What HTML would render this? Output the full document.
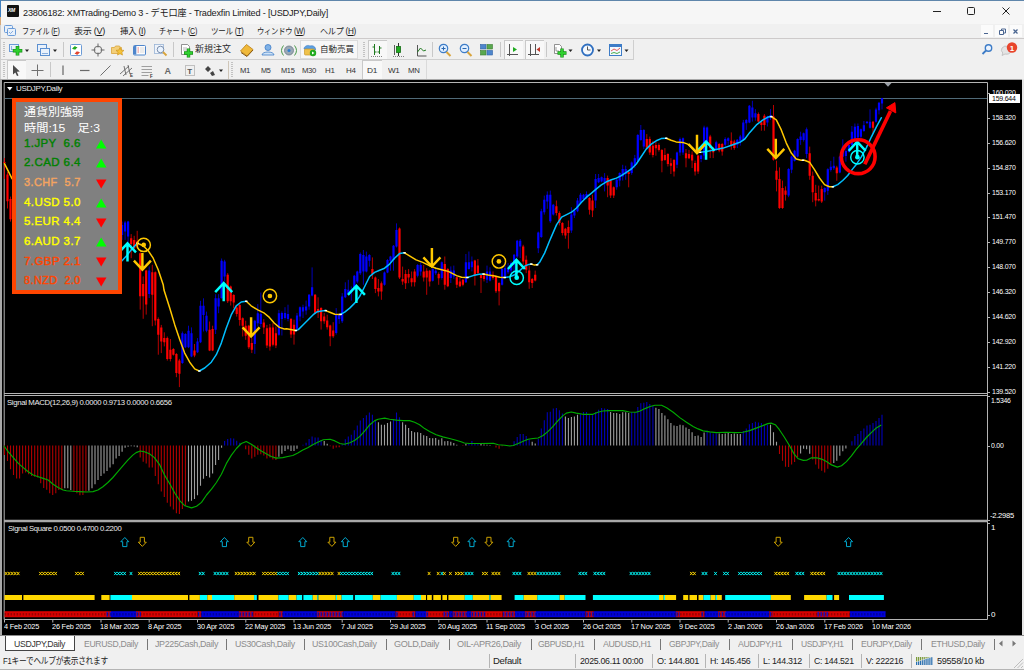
<!DOCTYPE html><html lang="ja"><head><meta charset="utf-8"><title>USDJPY,Daily</title><style>
html,body{margin:0;padding:0;}
body{width:1024px;height:670px;overflow:hidden;background:#f0f0f0;font-family:"Liberation Sans","Noto Sans CJK JP",sans-serif;position:relative;}
.abs{position:absolute;}
.t{position:absolute;white-space:nowrap;line-height:1;}
#titlebar{left:1px;top:1px;width:1023px;height:23px;background:#f6f6f6;}
#menubar{left:1px;top:24px;width:1023px;height:14px;background:#f0f0f0;}
.menu{font-size:8.5px;color:#1a1a1a;top:27px;letter-spacing:-0.3px}
.tf{font-size:7px;color:#333;top:67px;letter-spacing:-0.3px}
.ax{font-size:8px;color:#fff;letter-spacing:-0.25px;left:991px}
.dt{font-size:8px;color:#fff;letter-spacing:-0.2px;top:623px}
.tab{font-size:9px;color:#8c8c8c;top:640px;letter-spacing:-0.35px}
.st{font-size:9px;color:#222;top:657px;letter-spacing:-0.3px}
.sep{position:absolute;width:1px;background:#c8c8c8;}
.row{position:absolute;left:24px;font-weight:normal;font-size:11.8px;letter-spacing:0.42px;white-space:nowrap;line-height:1;-webkit-text-stroke:0.42px currentColor}

.cl{font-size:8px;color:#ececec;letter-spacing:-0.35px}
.xm{font-size:5px;top:570.500px;letter-spacing:0.516px;font-weight:bold;line-height:1}
</style></head><body>
<div class="abs" style="left:0;top:0;width:1024px;height:1px;background:#5f86ab"></div>
<div class="abs" style="left:0;top:0;width:1px;height:670px;background:linear-gradient(#3f7fc0 0 17px,#d6a878 17px 25px,#cfcfcf 25px)"></div>
<div class="abs" id="titlebar"></div>
<div class="abs" id="menubar"></div>
<div class="abs" style="left:7px;top:5px;width:12px;height:12px;background:#111;border-radius:1px"></div>
<div class="t" style="left:8px;top:8px;font-size:5px;font-weight:bold;font-style:italic;color:#fff;letter-spacing:-0.3px">XM</div>
<div class="t" id="title" style="left:23.0px;transform:scaleX(0.9615);transform-origin:0 50%;top:7.500px;font-size:9.500px;color:#1a1a1a;letter-spacing:-0.2px">23806182: XMTrading-Demo 3 - デモ口座 - Tradexfin Limited - [USDJPY,Daily]</div>
<svg class="abs" style="left:920px;top:1px" width="104" height="23" viewBox="0 0 104 23"><g stroke="#222" stroke-width="1" fill="none"><path d="M13 10.5h8"/><rect x="47.5" y="6.5" width="7" height="7" rx="1"/><path d="M82.500 6.500l7 7M89.500 6.500l-7 7"/></g></svg>
<div class="abs" style="left:981.0px;top:25px;width:12.0px;height:12px;background:#fbfbfb"></div>
<div class="abs" style="left:995.0px;top:25px;width:12.5px;height:12px;background:#fbfbfb"></div>
<div class="abs" style="left:1009.5px;top:25px;width:12.5px;height:12px;background:#fbfbfb"></div>
<svg class="abs" style="left:976px;top:25px" width="48" height="13" viewBox="0 0 48 13"><g stroke="#4a6590" stroke-width="1" fill="none"><path d="M8 8.500h4"/><path d="M23.500 5.500h4v4h-4zM25.500 5.500v-1.500h4v4h-1.500"/><path d="M37.500 4.500l4 4M41.500 4.500l-4 4" stroke-width="1.300"/></g></svg>
<svg class="abs" style="left:4px;top:24px" width="13" height="13" viewBox="0 0 13 13"><rect x="0.500" y="1.500" width="8" height="7" rx="1" fill="#e8f0fa" stroke="#6a9bd8"/><rect x="3.500" y="4.500" width="8" height="7" rx="1" fill="#e8f0fa" stroke="#6a9bd8"/><path d="M5 8l1.500 1.500L9 7" stroke="#6a9bd8" fill="none" stroke-width="0.800"/></svg>
<div class="t menu" id="m0" style="left:22.0px;transform:scaleX(0.8362);transform-origin:0 50%;">ファイル (<u>F</u>)</div>
<div class="t menu" id="m1" style="left:74.0px;transform:scaleX(1.0724);transform-origin:0 50%;">表示 (<u>V</u>)</div>
<div class="t menu" id="m2" style="left:119.5px;transform:scaleX(0.9963);transform-origin:0 50%;">挿入 (<u>I</u>)</div>
<div class="t menu" id="m3" style="left:159.0px;transform:scaleX(0.8317);transform-origin:0 50%;">チャート (<u>C</u>)</div>
<div class="t menu" id="m4" style="left:211.0px;transform:scaleX(0.8870);transform-origin:0 50%;">ツール (<u>T</u>)</div>
<div class="t menu" id="m5" style="left:257.0px;transform:scaleX(0.8593);transform-origin:0 50%;">ウィンドウ (<u>W</u>)</div>
<div class="t menu" id="m6" style="left:320.0px;transform:scaleX(0.9580);transform-origin:0 50%;">ヘルプ (<u>H</u>)</div>
<div class="abs" style="left:1px;top:38px;width:1023px;height:1px;background:#cdcaca"></div>
<div class="abs" style="left:1px;top:39px;width:1023px;height:40px;background:#f0f0f0"></div>
<div class="abs" style="left:1px;top:59px;width:633px;height:1px;background:#cfcfcf"></div>
<div class="abs" style="left:633px;top:40px;width:1px;height:20px;background:#cfcfcf"></div>
<div class="abs" style="left:426px;top:60px;width:1px;height:19px;background:#dadada"></div>
<div class="abs" style="left:2.5px;top:42px;width:2px;height:15px;background:repeating-linear-gradient(#c2c2c2 0 1px,#f0f0f0 1px 2px)"></div>
<div class="abs" style="left:363.0px;top:42px;width:2px;height:15px;background:repeating-linear-gradient(#c2c2c2 0 1px,#f0f0f0 1px 2px)"></div>
<div class="abs" style="left:2.5px;top:62px;width:2px;height:15px;background:repeating-linear-gradient(#c2c2c2 0 1px,#f0f0f0 1px 2px)"></div>
<div class="abs" style="left:231.0px;top:62px;width:2px;height:15px;background:repeating-linear-gradient(#c2c2c2 0 1px,#f0f0f0 1px 2px)"></div>
<div class="abs" style="left:228px;top:61px;width:1px;height:18px;background:#cfc6b8"></div>
<div class="sep" style="left:63px;top:42px;height:15px"></div>
<div class="sep" style="left:173px;top:42px;height:15px"></div>
<div class="sep" style="left:432px;top:42px;height:15px"></div>
<div class="sep" style="left:500px;top:42px;height:15px"></div>
<div class="sep" style="left:546px;top:42px;height:15px"></div>
<div class="sep" style="left:50px;top:62px;height:15px"></div>
<div class="abs" style="left:368px;top:40px;width:19px;height:19px;background:#f8f8f8;border-top:1px solid #c9c9c9;border-left:1px solid #c9c9c9;box-sizing:border-box"></div>
<div class="abs" style="left:504px;top:40px;width:19px;height:19px;background:#f8f8f8;border-top:1px solid #c9c9c9;border-left:1px solid #c9c9c9;box-sizing:border-box"></div>
<div class="abs" style="left:525px;top:40px;width:19px;height:19px;background:#f8f8f8;border-top:1px solid #c9c9c9;border-left:1px solid #c9c9c9;box-sizing:border-box"></div>
<div class="abs" style="left:7px;top:60px;width:19px;height:20px;background:#f8f8f8;border-top:1px solid #c9c9c9;border-left:1px solid #c9c9c9;box-sizing:border-box"></div>
<div class="abs" style="left:362px;top:60px;width:20px;height:19px;background:#f8f8f8;border-top:1px solid #c9c9c9;border-left:1px solid #c9c9c9;box-sizing:border-box"></div>
<div class="abs" style="left:300px;top:40px;width:58px;height:19px;border:1px solid #dcdcdc;background:#f7f7f7;box-sizing:border-box"></div>
<svg class="abs" style="left:0;top:39px" width="1024" height="21" viewBox="0 0 1024 21"><rect x="9.500" y="5.500" width="9" height="7" fill="#e9f1fb" stroke="#6b9bd6"/><path d="M11 10.500h6M11.500 7v4" stroke="#6b9bd6" stroke-width="0.700"/><path d="M17.500 7v9.500M12.800 11.700h9.500" stroke="#128a12" stroke-width="3.600"/><path d="M17.500 7.600v8.300M13.400 11.700h8.300" stroke="#2fd02f" stroke-width="2.300"/><path d="M25.0 10.5h4l-2 2.500z" fill="#222"/><rect x="37.500" y="5.500" width="9" height="7" fill="#e9f1fb" stroke="#5b8fd0"/><rect x="40.500" y="9.500" width="9" height="7" fill="#e9f1fb" stroke="#5b8fd0"/><path d="M42 14.500h6" stroke="#5b8fd0" stroke-width="0.700"/><path d="M53.0 10.5h4l-2 2.500z" fill="#222"/><rect x="70.500" y="5.500" width="11" height="11" rx="1" fill="#fff" stroke="#6b9bd6"/><path d="M72 9.500l3-2.500 1 1 1.500 0-2 2.500 -1.500 0z" fill="#1faa1f"/><path d="M80 13.500l-3 2.500-1-1-1.500 0 2-2.500 1.500 0z" fill="#e2452f"/><circle cx="98" cy="11" r="3.800" fill="none" stroke="#6a6a6a" stroke-width="1"/><path d="M98 4.500v4M98 13.500v4M91.500 11h4M100.500 11h4" stroke="#6a6a6a" stroke-width="1"/><path d="M111.500 8.500h3l1-1.500h4l1 1.500h1v6h-10z" fill="#f3cf7a" stroke="#d9a43b" stroke-width="0.800"/><path d="M120 8.500l1.200 2.600 2.800 0.300-2.100 1.900 0.600 2.800-2.500-1.400-2.500 1.400 0.600-2.800-2.100-1.900 2.800-0.300z" fill="#f5c33b" stroke="#c98f1a" stroke-width="0.600"/><rect x="133.500" y="6.500" width="12" height="9.500" rx="1" fill="#fdfdfd" stroke="#4f86cc"/><rect x="134" y="7" width="2.300" height="8.500" fill="#4f86cc"/><path d="M137.500 9h1.500M137.500 11h1.500M137.500 13h1.500" stroke="#d44" stroke-width="0.700"/><path d="M140 9h4.500M140 11h4.500M140 13h4.500" stroke="#c8c8c8" stroke-width="0.600"/><rect x="154.500" y="5.500" width="9" height="9" fill="#eef3fa" stroke="#9ab3d6" stroke-width="0.800"/><circle cx="160.500" cy="10.500" r="3.300" fill="#e9f3ff" stroke="#7b8fae" stroke-width="1"/><path d="M163 13l3.500 3.500" stroke="#d9a43b" stroke-width="1.800"/><path d="M181.500 5.500h6l2 2v8h-8z" fill="#fff" stroke="#777" stroke-width="0.800"/><path d="M183 9h4M183 11h4" stroke="#999" stroke-width="0.700"/><path d="M188.500 9.500v9M184 14h9" stroke="#128a12" stroke-width="3.400"/><path d="M188.500 10.100v7.800M184.600 14h7.800" stroke="#2fd02f" stroke-width="2.100"/><path d="M240.500 12l6-6.500 6.500 5-6 6.500z" fill="#f0b93a" stroke="#b97d14" stroke-width="0.800"/><path d="M241 13.500l6 4 6-6.500" fill="none" stroke="#8a5a0c" stroke-width="1"/><circle cx="268" cy="8.500" r="3" fill="#7fb1e6" stroke="#3d7cc7" stroke-width="0.800"/><path d="M262 16c0-4 12-4 12 0z" fill="#cfe3f7" stroke="#3d7cc7" stroke-width="0.800"/><circle cx="289" cy="11.500" r="4.500" fill="#9aa8b5" stroke="#6e7c8a" stroke-width="0.800"/><path d="M283.500 6.500a8 8 0 0 0 0 10M294.500 6.500a8 8 0 0 1 0 10" fill="none" stroke="#4a9a4a" stroke-width="1"/><circle cx="289" cy="11.500" r="1.500" fill="#2e7fd1"/><path d="M304 10c0-3 4-4.500 6-3 3-1 6 1 5.500 4z" fill="#5da0e0" stroke="#3d7cc7" stroke-width="0.600"/><rect x="304.500" y="10" width="10" height="6" rx="1" fill="#f0c14a" stroke="#c9962a" stroke-width="0.700"/><circle cx="313" cy="14" r="3.200" fill="#1faa1f"/><path d="M312 12.500l2.500 1.500-2.500 1.500z" fill="#fff"/><path d="M374.500 5v11M372.500 8h2M374.500 13h2M379.500 7v8M377.500 13h2M379.500 9h2" stroke="#1f7a1f" stroke-width="1" fill="none"/><path d="M371 17.500h11" stroke="#666" stroke-width="0.800" stroke-dasharray="1 1"/><path d="M398.500 4v13" stroke="#333" stroke-width="1"/><rect x="396.500" y="7.500" width="4" height="6" fill="#1faa1f" stroke="#156d15" stroke-width="0.800"/><path d="M394.500 6v10" stroke="#333" stroke-width="0.800"/><path d="M393 17.500h11" stroke="#666" stroke-width="0.800" stroke-dasharray="1 1"/><path d="M417.500 6v11h9" stroke="#555" stroke-width="1" fill="none"/><path d="M417.500 13l3-4 3 3 2.500-1" stroke="#1f7a1f" stroke-width="1" fill="none"/><circle cx="443.500" cy="9.500" r="4.200" fill="#dfeeff" stroke="#3d7cc7" stroke-width="1.200"/><path d="M441.500 9.500h4M443.500 7.500v4" stroke="#2b68b0" stroke-width="1"/><path d="M446.500 13l4 4" stroke="#d9a43b" stroke-width="2"/><circle cx="464.500" cy="9.500" r="4.200" fill="#dfeeff" stroke="#3d7cc7" stroke-width="1.200"/><path d="M462.500 9.500h4" stroke="#2b68b0" stroke-width="1"/><path d="M467.500 13l4 4" stroke="#d9a43b" stroke-width="2"/><rect x="480.500" y="5.500" width="5.500" height="4.500" fill="#4f86cc" stroke="#2f62a6" stroke-width="0.600"/><rect x="487" y="5.500" width="5.500" height="4.500" fill="#5aa84e" stroke="#3b7d32" stroke-width="0.600"/><rect x="480.500" y="11.500" width="5.500" height="4.500" fill="#5aa84e" stroke="#3b7d32" stroke-width="0.600"/><rect x="487" y="11.500" width="5.500" height="4.500" fill="#4f86cc" stroke="#2f62a6" stroke-width="0.600"/><path d="M509.500 5v12M507 15.500h11" stroke="#555" stroke-width="1" fill="none"/><path d="M513 8l4 2.500-4 2.500z" fill="#1faa1f"/><path d="M530.500 5v12M528 15.500h11M535.500 5v10" stroke="#555" stroke-width="1" fill="none"/><path d="M540 8l-3.500 2.500 3.500 2.500z" fill="#c0392b"/><path d="M554.500 5.500h5l2 2v7h-7z" fill="#fff" stroke="#777" stroke-width="0.800"/><path d="M556 8v4h3" stroke="#777" stroke-width="0.700" fill="none"/><path d="M562 9.500v9M557.500 14h9" stroke="#128a12" stroke-width="3.400"/><path d="M562 10.100v7.800M558.100 14h7.800" stroke="#2fd02f" stroke-width="2.100"/><path d="M568.5 10.5h4l-2 2.500z" fill="#222"/><circle cx="587.500" cy="11" r="5.500" fill="#f4f8fd" stroke="#2f6fc0" stroke-width="1.800"/><path d="M587.500 7.500v3.500h3" stroke="#444" stroke-width="0.900" fill="none"/><path d="M597.0 10.5h4l-2 2.500z" fill="#222"/><rect x="609.500" y="5.500" width="12" height="11" fill="#f4f8fd" stroke="#3d7cc7" stroke-width="1"/><rect x="610" y="6" width="11" height="2" fill="#3d7cc7"/><path d="M611 12l3-2 3 1.500 3-2.500" stroke="#d33" stroke-width="0.800" fill="none"/><path d="M611 14.500l3-1 3 1 3-1.500" stroke="#1f9a1f" stroke-width="0.800" fill="none"/><path d="M624.5 10.5h4l-2 2.500z" fill="#222"/><circle cx="988.500" cy="9" r="3.200" fill="#eaf3ff" stroke="#3d7cc7" stroke-width="1.400"/><path d="M986 11.500l-3.500 3.500" stroke="#3d7cc7" stroke-width="1.800"/><path d="M1002 9a5 4 0 1 1 3 6l-3 1.500 0.800-2.500a4 4 0 0 1-0.800-5z" fill="#e4e4e4" stroke="#b5b5b5" stroke-width="0.700"/><circle cx="1012" cy="8.500" r="5.200" fill="#e8452c"/><text x="1012" y="11.500" font-size="8" font-weight="bold" fill="#fff" text-anchor="middle" font-family="Liberation Sans,sans-serif">1</text></svg>
<div class="t" id="neworder" style="left:195.0px;transform:scaleX(1.0226);transform-origin:0 50%;top:45.200px;font-size:8.800px;color:#2a2a2a;letter-spacing:0px">新規注文</div>
<div class="t" id="autotr" style="left:320.0px;transform:scaleX(0.9995);transform-origin:0 50%;top:45.200px;font-size:8.500px;color:#2a2a2a;letter-spacing:0px">自動売買</div>
<svg class="abs" style="left:0;top:60px" width="440" height="20" viewBox="0 0 440 20"><path d="M13 5v9.500l2.300-2 1.700 3.600 1.500-0.700-1.700-3.600 3-0.200z" fill="#4a4a4a"/><path d="M37.500 4.500v11.500M31.500 10.500h12" stroke="#707070" stroke-width="1"/><path d="M63 5.500v9.500" stroke="#7a7a7a" stroke-width="1.400"/><path d="M80 10.500h9.500" stroke="#6a6a6a" stroke-width="1.200"/><path d="M100.500 15.500l10-10" stroke="#707070" stroke-width="1"/><path d="M120 14l9-8M123 16l9-8M124 6l2 9M128 5l2 9" stroke="#555" stroke-width="0.800" fill="none"/><text x="130" y="17" font-size="4.500" font-weight="bold" fill="#333" font-family="Liberation Sans,sans-serif">E</text><path d="M141.500 6.500h10.500M141.500 9.500h10.500M141.500 12.500h10.500M141.500 15.500h7" stroke="#8a8a8a" stroke-width="0.800"/><text x="150" y="18" font-size="4.500" font-weight="bold" fill="#333" font-family="Liberation Sans,sans-serif">F</text><text x="164.500" y="14" font-size="9" font-weight="bold" fill="#666" font-family="Liberation Sans,sans-serif">A</text><rect x="185.500" y="5.500" width="9" height="10" fill="none" stroke="#777" stroke-width="0.800" stroke-dasharray="1 1"/><text x="187.200" y="13.500" font-size="8" font-weight="bold" fill="#555" font-family="Liberation Sans,sans-serif">T</text><path d="M205 9l3-3 3 3-3 3zM210 13l3-2 2 4-3 1z" fill="#444"/><path d="M219 9.500h4l-2 2.500z" fill="#222"/></svg>
<div class="t tf" id="tf0" style="left:240.0px;transform:scaleX(1.0959);transform-origin:0 50%;">M1</div>
<div class="t tf" id="tf1" style="left:261.0px;transform:scaleX(1.0411);transform-origin:0 50%;">M5</div>
<div class="t tf" id="tf2" style="left:280.5px;transform:scaleX(1.0614);transform-origin:0 50%;">M15</div>
<div class="t tf" id="tf3" style="left:301.5px;transform:scaleX(1.1007);transform-origin:0 50%;">M30</div>
<div class="t tf" id="tf4" style="left:325.0px;transform:scaleX(1.1364);transform-origin:0 50%;">H1</div>
<div class="t tf" id="tf5" style="left:345.5px;transform:scaleX(1.1364);transform-origin:0 50%;">H4</div>
<div class="t tf" id="tf6" style="left:367.0px;transform:scaleX(1.1963);transform-origin:0 50%;">D1</div>
<div class="t tf" id="tf7" style="left:388.0px;transform:scaleX(1.1609);transform-origin:0 50%;">W1</div>
<div class="t tf" id="tf8" style="left:408.0px;transform:scaleX(1.1168);transform-origin:0 50%;">MN</div>
<div class="abs" style="left:0;top:79px;width:1024px;height:557px;background:#a9a9a9"></div>
<div class="abs" style="left:2px;top:80px;width:1020px;height:555px;background:#000"></div>
<div class="abs" style="left:1022px;top:79px;width:2px;height:557px;background:#e6e6e6"></div>
<svg class="abs" style="left:0;top:0" width="1024" height="670" viewBox="0 0 1024 670"><path d="M4.200 619.500V82.500H987.500V619.500H4.200" fill="none" stroke="#b4b4b4" stroke-width="1"/><path d="M4 393.500H988M4 395.500H988" stroke="#b4b4b4" stroke-width="1"/><path d="M4 521H988" stroke="#a8a8a8" stroke-width="2.400"/><path d="M5 98.500H987" stroke="#506a78" stroke-width="1"/><path d="M884.500 83h7l-3.500 3.800z" fill="#9aa0a8"/><path d="M988 93.5h2" stroke="#b4b4b4" stroke-width="1"/><path d="M988 118.5h2" stroke="#b4b4b4" stroke-width="1"/><path d="M988 143.5h2" stroke="#b4b4b4" stroke-width="1"/><path d="M988 168.5h2" stroke="#b4b4b4" stroke-width="1"/><path d="M988 193.5h2" stroke="#b4b4b4" stroke-width="1"/><path d="M988 217.5h2" stroke="#b4b4b4" stroke-width="1"/><path d="M988 242.5h2" stroke="#b4b4b4" stroke-width="1"/><path d="M988 267.5h2" stroke="#b4b4b4" stroke-width="1"/><path d="M988 292.5h2" stroke="#b4b4b4" stroke-width="1"/><path d="M988 317.5h2" stroke="#b4b4b4" stroke-width="1"/><path d="M988 342.5h2" stroke="#b4b4b4" stroke-width="1"/><path d="M988 367.5h2" stroke="#b4b4b4" stroke-width="1"/><path d="M988 392.5h2" stroke="#b4b4b4" stroke-width="1"/><path d="M988 396.5h2" stroke="#b4b4b4" stroke-width="1"/><path d="M988 446.5h2" stroke="#b4b4b4" stroke-width="1"/><path d="M988 520.5h2" stroke="#b4b4b4" stroke-width="1"/><path d="M988 523.5h2" stroke="#b4b4b4" stroke-width="1"/><path d="M988 615.5h2" stroke="#b4b4b4" stroke-width="1"/><path d="M4.5 620v2.500" stroke="#b4b4b4" stroke-width="1"/><path d="M52.8 620v2.500" stroke="#b4b4b4" stroke-width="1"/><path d="M101.0 620v2.500" stroke="#b4b4b4" stroke-width="1"/><path d="M149.2 620v2.500" stroke="#b4b4b4" stroke-width="1"/><path d="M197.5 620v2.500" stroke="#b4b4b4" stroke-width="1"/><path d="M245.8 620v2.500" stroke="#b4b4b4" stroke-width="1"/><path d="M294.0 620v2.500" stroke="#b4b4b4" stroke-width="1"/><path d="M342.2 620v2.500" stroke="#b4b4b4" stroke-width="1"/><path d="M390.5 620v2.500" stroke="#b4b4b4" stroke-width="1"/><path d="M438.8 620v2.500" stroke="#b4b4b4" stroke-width="1"/><path d="M487.0 620v2.500" stroke="#b4b4b4" stroke-width="1"/><path d="M535.2 620v2.500" stroke="#b4b4b4" stroke-width="1"/><path d="M583.5 620v2.500" stroke="#b4b4b4" stroke-width="1"/><path d="M631.8 620v2.500" stroke="#b4b4b4" stroke-width="1"/><path d="M680.0 620v2.500" stroke="#b4b4b4" stroke-width="1"/><path d="M728.2 620v2.500" stroke="#b4b4b4" stroke-width="1"/><path d="M776.5 620v2.500" stroke="#b4b4b4" stroke-width="1"/><path d="M824.8 620v2.500" stroke="#b4b4b4" stroke-width="1"/><path d="M873.0 620v2.500" stroke="#b4b4b4" stroke-width="1"/><path d="M122.1 221.6V239.9M125.1 220.8V239.9M128.1 220.8V242.4M149.2 266.5V298.0M221.6 258.5V298.8M224.6 259.8V281.4M182.4 331.5V363.9M185.4 333.2V348.1M188.5 325.7V348.1M191.5 327.4V357.2M197.5 338.1V353.1M200.5 300.8V343.1M203.5 298.3V331.5M206.5 311.6V332.3M215.6 294.2V334.0M218.6 294.2V313.2M254.8 319.9V353.9M257.8 304.1V326.5M260.8 292.5V327.4M278.9 309.9V335.7M281.9 311.4V335.5M285.0 307.2V319.7M288.0 304.7V321.3M297.0 313.0V329.6M300.0 306.4V321.3M303.0 304.7V318.0M306.1 300.6V314.7M309.1 294.0V309.7M312.1 267.4V296.4M336.2 308.1V334.6M339.2 313.0V323.8M342.2 293.1V323.0M345.3 282.3V298.1M348.3 279.8V294.8M351.3 286.5V300.6M354.3 274.9V290.6M357.3 270.7V283.2M360.3 252.5V274.9M363.4 250.0V284.8M366.4 251.6V272.4M369.4 254.1V266.6M384.5 271.5V285.7M387.5 259.1V273.2M390.5 255.8V270.7M393.5 245.0V270.7M396.5 223.4V247.5M417.6 264.1V277.4M420.7 262.4V275.7M432.7 268.2V281.5M435.7 267.4V274.9M441.8 261.4V279.7M450.8 266.4V283.0M453.8 265.6V278.9M465.9 254.0V283.0M468.9 251.5V269.7M471.9 256.5V271.4M487.0 265.6V283.0M490.0 267.3V281.4M502.1 268.1V285.5M505.1 262.3V278.0M508.1 263.1V273.9M511.1 261.4V274.7M514.1 254.0V273.1M517.2 239.9V258.1M520.2 239.0V258.1M538.3 231.6V253.1M541.3 208.8V237.9M544.3 195.6V214.6M547.3 191.4V208.8M550.3 190.6V222.9M553.3 203.9V215.5M571.4 207.2V232.9M574.4 209.7V218.0M577.5 198.0V212.2M580.5 193.1V203.9M583.5 193.9V199.7M586.5 191.4V198.9M595.6 174.0V208.0M598.6 174.0V183.1M601.6 176.5V182.3M604.6 173.1V191.4M616.7 179.0V189.7M619.7 172.3V186.4M622.7 164.8V180.6M625.7 165.7V179.8M631.7 161.5V174.8M634.8 154.9V168.2M637.8 134.1V161.5M640.8 125.0V140.8M643.8 129.2V149.1M677.0 151.6V168.2M680.0 137.5V155.7M683.0 137.5V154.9M701.1 154.8V162.2M704.1 125.7V159.7M707.1 126.5V144.8M716.2 140.7V150.6M725.2 137.3V146.5M728.2 137.3V144.8M737.3 139.0V148.1M740.3 134.8V145.6M743.3 119.9V140.7M746.3 119.1V129.9M749.4 105.0V123.2M752.4 100.8V121.6M755.4 109.1V120.7M767.4 115.8V126.5M770.5 109.1V119.9M788.6 168.2V197.2M791.6 155.7V173.2M794.6 149.9V161.5M797.6 138.3V157.4M800.6 131.7V144.9M803.6 132.5V141.6M806.6 127.5V158.2M824.7 187.3V200.6M827.8 168.3V194.9M830.8 160.9V171.6M833.8 156.7V170.0M839.8 155.9V173.3M842.8 139.3V157.5M845.9 145.1V161.7M848.9 144.3V152.6M851.9 126.0V145.9M854.9 123.5V139.3M857.9 123.5V141.8M860.9 128.5V138.4M863.9 121.0V131.8M867.0 121.0V123.5M870.0 109.4V128.5M876.0 107.7V122.7M879.0 101.9V114.4M882.0 97.8V109.4" stroke="#0000ff" stroke-width="1" opacity="0.720"/><path d="M4.5 158.0V179.0M7.5 172.0V208.5M10.5 196.6V221.6M131.2 234.1V258.2M134.2 235.8V251.5M137.2 230.8V248.2M140.2 252.4V309.6M143.2 276.4V318.8M146.2 269.8V314.6M152.3 264.8V326.2M155.3 271.4V325.4M227.7 273.1V303.0M230.7 285.6V305.5M158.3 317.4V354.7M161.3 324.9V353.1M164.3 332.3V346.4M167.3 336.5V360.6M170.4 339.0V361.4M173.4 348.1V355.6M176.4 353.1V377.2M179.4 358.9V387.1M194.5 344.0V357.2M209.6 321.5V351.1M212.6 325.7V351.1M233.7 294.2V308.3M236.7 305.8V316.6M239.7 304.1V325.7M242.7 317.4V336.5M245.7 320.7V339.8M248.8 324.9V348.9M251.8 338.1V353.1M263.8 319.1V334.0M266.9 324.9V348.1M269.9 324.0V350.6M272.9 323.2V346.4M275.9 326.5V348.1M291.0 318.0V337.9M294.0 319.7V344.6M315.1 294.0V313.9M318.1 297.3V318.0M321.1 307.2V329.6M324.2 313.0V323.8M327.2 314.7V329.6M330.2 324.7V346.2M333.2 322.2V337.9M372.4 257.4V279.0M375.4 276.5V293.1M378.4 279.0V296.4M381.4 281.5V299.8M399.5 227.5V279.0M402.6 266.6V284.8M405.6 269.9V289.0M408.6 269.1V283.2M411.6 271.5V286.5M414.6 269.1V286.5M423.7 264.9V281.5M426.7 268.2V294.8M429.7 269.9V286.5M438.7 272.4V284.8M444.8 256.5V289.7M447.8 268.1V287.2M456.8 276.4V288.0M459.9 278.0V287.2M462.9 278.9V286.3M474.9 259.8V285.5M477.9 259.0V273.9M481.0 273.9V293.0M484.0 274.7V281.4M493.0 271.4V279.7M496.0 275.6V293.0M499.1 282.2V305.4M523.2 244.8V264.8M526.2 255.6V273.1M529.2 265.6V288.8M532.2 278.0V288.0M535.2 270.6V281.4M556.4 200.5V215.5M559.4 211.3V225.4M562.4 222.1V235.4M565.4 227.9V238.7M568.4 220.5V248.7M589.5 197.2V214.6M592.5 194.7V217.1M607.6 175.6V197.2M610.6 179.8V198.0M613.7 186.4V198.0M628.7 171.5V187.3M646.8 134.1V148.2M649.8 136.6V154.9M652.9 140.8V157.4M655.9 141.6V155.7M658.9 143.3V151.6M661.9 149.1V172.3M664.9 148.2V160.7M667.9 153.2V166.5M670.9 158.2V174.0M674.0 159.0V176.5M686.0 149.1V167.3M689.0 149.9V159.0M692.1 151.4V168.0M695.1 160.6V175.5M698.1 154.8V173.9M710.2 134.8V158.1M713.2 147.3V158.1M719.2 143.1V152.3M722.2 143.1V155.6M731.3 132.4V149.8M734.3 139.8V149.8M758.4 112.4V122.4M761.4 121.6V130.7M764.4 114.1V130.7M773.5 105.0V160.6M776.5 160.7V191.4M779.5 167.4V208.9M782.5 180.6V208.9M785.5 186.4V200.6M809.7 146.6V179.8M812.7 171.5V202.2M815.7 184.8V206.4M818.7 185.6V201.4M821.7 185.6V203.0M836.8 165.8V180.8M873.0 121.0V133.5" stroke="#ff0000" stroke-width="1" opacity="0.720"/><path d="M122.1 225.0V234.9M125.1 222.5V231.6M128.1 221.6V236.6M149.2 270.6V293.9M221.6 260.7V298.0M224.6 261.5V276.4M182.4 333.2V363.0M185.4 334.0V347.3M188.5 330.7V347.3M191.5 333.2V356.4M197.5 341.5V352.3M200.5 305.8V342.3M203.5 305.8V314.9M206.5 315.7V330.7M215.6 298.3V329.8M218.6 298.3V306.6M254.8 320.7V344.0M257.8 313.2V323.2M260.8 314.1V324.0M278.9 313.2V334.8M281.9 313.0V318.9M285.0 313.0V318.0M288.0 313.9V318.9M297.0 315.5V328.8M300.0 307.2V316.4M303.0 307.2V311.4M306.1 306.4V310.6M309.1 294.8V306.4M312.1 287.3V295.6M336.2 313.9V333.0M339.2 313.9V318.9M342.2 296.4V321.3M345.3 289.0V297.3M348.3 289.8V293.1M351.3 289.8V292.3M354.3 275.7V289.8M357.3 271.5V281.5M360.3 254.1V273.2M363.4 254.9V271.5M366.4 256.6V271.5M369.4 254.9V260.8M384.5 272.4V284.8M387.5 259.9V272.4M390.5 256.6V260.8M393.5 245.8V259.9M396.5 230.0V246.6M417.6 264.9V275.7M420.7 264.9V271.5M432.7 269.1V280.7M435.7 270.7V273.2M441.8 262.3V278.0M450.8 270.6V278.0M453.8 270.6V276.4M465.9 262.3V282.2M468.9 262.3V268.9M471.9 261.4V267.3M487.0 271.4V279.7M490.0 271.4V280.5M502.1 268.9V284.7M505.1 268.1V276.4M508.1 268.9V272.2M511.1 263.1V270.6M514.1 254.8V264.8M517.2 240.7V256.5M520.2 240.7V246.5M538.3 232.4V248.2M541.3 211.3V237.1M544.3 199.7V212.2M547.3 194.7V201.4M550.3 194.7V221.3M553.3 204.7V214.6M571.4 214.6V230.4M574.4 210.5V215.5M577.5 200.5V211.3M580.5 194.7V203.0M583.5 194.7V198.9M586.5 193.9V198.0M595.6 179.0V200.5M598.6 178.1V182.3M601.6 177.3V181.4M604.6 178.1V182.3M616.7 179.8V187.3M619.7 173.1V180.6M622.7 169.0V176.5M625.7 169.0V174.0M631.7 162.4V173.1M634.8 158.2V165.7M637.8 135.0V160.7M640.8 130.0V139.9M643.8 130.0V146.6M677.0 152.4V164.8M680.0 139.1V152.4M683.0 138.3V152.4M701.1 155.6V158.9M704.1 127.4V155.6M707.1 127.4V141.5M716.2 142.3V149.8M725.2 139.0V144.8M728.2 138.2V140.7M737.3 139.8V144.8M740.3 136.5V140.7M743.3 122.4V139.8M746.3 119.9V123.2M749.4 105.8V122.4M752.4 107.5V117.4M755.4 113.3V117.4M767.4 116.6V122.4M770.5 114.9V118.2M788.6 169.0V195.6M791.6 156.6V169.8M794.6 150.8V160.7M797.6 139.1V156.6M800.6 136.6V140.0M803.6 133.3V140.0M806.6 129.2V154.1M824.7 188.1V192.3M827.8 169.2V190.7M830.8 166.7V170.0M833.8 165.8V168.3M839.8 156.7V172.5M842.8 146.7V156.7M845.9 150.9V155.9M848.9 145.1V151.7M851.9 131.8V145.1M854.9 126.8V138.4M857.9 126.0V137.6M860.9 129.3V136.8M863.9 125.2V131.0M867.0 121.8V123.2M870.0 121.8V127.7M876.0 109.4V121.8M879.0 102.8V110.2M882.0 98.3V103.6" stroke="#0000ff" stroke-width="2.200"/><path d="M4.5 162.0V163.0M7.5 174.5V201.3M10.5 199.0V219.3M131.2 238.2V244.1M134.2 239.9V248.2M137.2 241.6V246.5M140.2 253.2V296.3M143.2 283.9V296.3M146.2 270.6V304.6M152.3 272.3V294.7M155.3 272.3V320.4M227.7 274.8V301.3M230.7 286.4V301.3M158.3 319.1V334.8M161.3 327.4V341.5M164.3 338.1V342.3M167.3 338.1V358.9M170.4 349.8V358.9M173.4 348.9V354.7M176.4 353.9V373.0M179.4 360.6V373.8M194.5 350.6V355.6M209.6 329.8V350.6M212.6 329.0V350.6M233.7 295.0V302.5M236.7 307.4V314.1M239.7 304.9V319.9M242.7 318.2V325.7M245.7 325.7V335.7M248.8 325.7V347.3M251.8 343.1V349.8M263.8 322.4V327.4M266.9 328.2V345.6M269.9 327.4V346.4M272.9 327.4V344.8M275.9 333.2V345.6M291.0 318.9V334.6M294.0 324.7V334.6M315.1 294.8V313.0M318.1 308.9V312.2M321.1 308.1V321.3M324.2 316.4V321.3M327.2 320.5V327.2M330.2 325.5V336.3M333.2 330.5V336.3M372.4 269.1V274.0M375.4 277.4V289.0M378.4 288.1V291.5M381.4 283.2V291.5M399.5 228.4V277.4M402.6 279.0V281.5M405.6 274.0V283.2M408.6 274.0V277.4M411.6 278.2V282.3M414.6 271.5V282.3M423.7 271.5V277.4M426.7 270.7V277.4M429.7 270.7V281.5M438.7 274.0V278.2M444.8 263.9V284.7M447.8 268.9V286.3M456.8 277.2V284.7M459.9 281.4V286.3M462.9 279.7V284.7M474.9 260.6V274.7M477.9 265.6V273.1M481.0 274.7V278.0M484.0 275.6V278.9M493.0 274.7V278.0M496.0 276.4V291.3M499.1 283.0V291.3M523.2 246.5V261.4M526.2 259.8V269.7M529.2 270.6V282.2M532.2 278.9V283.0M535.2 274.7V280.5M556.4 206.3V213.0M559.4 213.0V222.9M562.4 222.9V232.9M565.4 228.8V235.4M568.4 227.1V232.9M589.5 198.0V209.7M592.5 200.5V210.5M607.6 178.1V185.6M610.6 180.6V195.6M613.7 187.3V195.6M628.7 172.3V174.0M646.8 139.1V147.4M649.8 139.1V152.4M652.9 145.8V154.9M655.9 144.9V148.2M658.9 144.9V149.9M661.9 149.9V160.7M664.9 154.9V159.9M667.9 154.1V164.0M670.9 163.2V165.7M674.0 159.9V171.5M686.0 153.2V158.2M689.0 154.1V158.2M692.1 154.8V160.6M695.1 163.1V171.4M698.1 155.6V171.4M710.2 136.5V148.1M713.2 148.1V152.3M719.2 144.0V150.6M722.2 144.0V151.4M731.3 140.7V145.6M734.3 141.5V148.1M758.4 114.1V121.6M761.4 122.4V124.9M764.4 115.8V124.9M773.5 116.6V159.7M776.5 170.7V179.8M779.5 179.0V208.0M782.5 188.1V208.0M785.5 190.6V194.7M809.7 153.2V175.7M812.7 175.7V192.3M815.7 193.1V200.6M818.7 198.9V200.6M821.7 188.9V201.4M836.8 167.5V173.3M873.0 121.8V127.7" stroke="#ff0000" stroke-width="2.200"/><path d="M4.5 163.7 L12.0 178.7" fill="none" stroke="#ffc800" stroke-width="1.500" stroke-linejoin="round" stroke-linecap="round"/><path d="M122.0 260.7 L126.6 255.7 L132.5 248.2 L137.4 243.2" fill="none" stroke="#00bfff" stroke-width="1.500" stroke-linejoin="round" stroke-linecap="round"/><path d="M137.4 243.2 L143.2 245.7 L148.2 250.7 L153.2 258.2 L158.2 269.8 L163.2 284.7 L164.0 290.0 L169.8 308.3 L174.8 324.9 L179.8 339.8 L184.7 353.1 L189.7 362.2 L194.7 368.9 L199.3 371.0" fill="none" stroke="#ffc800" stroke-width="1.500" stroke-linejoin="round" stroke-linecap="round"/><path d="M199.3 371.0 L204.7 368.0 L211.3 362.2 L216.3 354.7 L221.3 343.1 L226.2 328.2 L231.2 314.9 L236.2 305.8 L241.2 302.0 L246.2 301.3" fill="none" stroke="#00bfff" stroke-width="1.500" stroke-linejoin="round" stroke-linecap="round"/><path d="M246.2 301.3 L251.1 305.8 L257.8 309.9 L264.4 313.2 L269.4 317.4 L274.4 323.2 L279.4 327.4 L284.3 329.0 L286.6 328.8 L295.8 330.5" fill="none" stroke="#ffc800" stroke-width="1.500" stroke-linejoin="round" stroke-linecap="round"/><path d="M295.8 330.5 L298.3 329.6 L303.2 324.7 L308.2 319.7 L313.2 314.7 L317.4 311.7 L321.5 310.9 L325.7 310.6" fill="none" stroke="#00bfff" stroke-width="1.500" stroke-linejoin="round" stroke-linecap="round"/><path d="M325.7 310.6 L329.8 312.2 L334.8 314.2 L340.6 314.4" fill="none" stroke="#ffc800" stroke-width="1.500" stroke-linejoin="round" stroke-linecap="round"/><path d="M340.6 314.4 L344.7 312.2 L349.7 308.1 L354.7 303.1 L359.7 296.4 L364.7 286.5 L369.6 276.5 L374.6 272.4 L379.6 270.2 L384.6 268.2 L389.6 264.1 L394.5 258.3 L399.5 253.6 L404.5 252.8" fill="none" stroke="#00bfff" stroke-width="1.500" stroke-linejoin="round" stroke-linecap="round"/><path d="M404.5 252.8 L409.5 255.8 L416.1 259.9 L422.8 262.4 L429.4 265.7 L436.0 268.2 L442.7 269.9 L448.3 271.4 L456.6 275.6 L461.6 277.2 L467.4 277.5" fill="none" stroke="#ffc800" stroke-width="1.500" stroke-linejoin="round" stroke-linecap="round"/><path d="M467.4 277.5 L473.2 275.6 L479.0 274.2 L483.5 274.1" fill="none" stroke="#00bfff" stroke-width="1.500" stroke-linejoin="round" stroke-linecap="round"/><path d="M483.5 274.1 L488.1 275.1 L494.8 276.0 L499.8 277.2 L504.7 277.5" fill="none" stroke="#ffc800" stroke-width="1.500" stroke-linejoin="round" stroke-linecap="round"/><path d="M504.7 277.5 L509.7 276.7 L514.7 274.7 L519.7 270.6 L524.7 266.1 L528.8 264.4 L531.3 264.1" fill="none" stroke="#00bfff" stroke-width="1.500" stroke-linejoin="round" stroke-linecap="round"/><path d="M531.3 264.1 L534.6 265.1 L537.1 264.8" fill="none" stroke="#ffc800" stroke-width="1.500" stroke-linejoin="round" stroke-linecap="round"/><path d="M537.1 264.8 L539.6 262.3 L544.6 253.1 L549.6 240.7 L551.6 236.1 L556.6 224.6 L561.6 217.1 L566.6 214.6 L571.5 212.2 L576.5 208.0 L581.5 202.2 L586.5 197.2 L591.5 193.1 L596.4 188.9 L601.4 184.8 L606.4 181.8 L611.4 179.8 L616.4 178.1 L621.3 175.6 L626.3 172.3 L631.3 169.0 L636.3 164.0 L641.3 156.5 L646.2 149.1 L651.2 144.1 L656.2 140.8 L661.2 138.6 L666.2 138.3" fill="none" stroke="#00bfff" stroke-width="1.500" stroke-linejoin="round" stroke-linecap="round"/><path d="M666.2 138.3 L671.1 140.3 L676.1 141.9 L682.8 142.4 L687.7 144.1 L692.7 148.2 L696.9 152.4 L700.0 152.3" fill="none" stroke="#ffc800" stroke-width="1.500" stroke-linejoin="round" stroke-linecap="round"/><path d="M700.0 152.3 L706.6 151.4 L714.9 149.8 L723.2 148.1 L731.5 145.3 L739.8 142.3 L744.8 139.0 L749.8 132.4 L756.4 124.9 L763.0 119.9 L768.0 117.1 L771.3 116.6" fill="none" stroke="#00bfff" stroke-width="1.500" stroke-linejoin="round" stroke-linecap="round"/><path d="M771.3 116.6 L776.3 119.9 L781.3 129.9 L786.3 143.1 L791.3 153.1 L796.2 158.9 L801.2 160.2 L804.5 160.2 L809.5 162.2 L814.5 169.7 L819.5 178.0 L824.5 184.6 L829.4 186.8 L832.8 186.8" fill="none" stroke="#ffc800" stroke-width="1.500" stroke-linejoin="round" stroke-linecap="round"/><path d="M832.8 186.8 L837.7 184.6 L842.7 180.5 L847.7 175.5 L852.7 168.9 L856.5 164.2 L861.5 156.7 L866.4 147.6 L871.4 136.8 L876.4 126.8 L881.4 117.7" fill="none" stroke="#00bfff" stroke-width="1.500" stroke-linejoin="round" stroke-linecap="round"/><path d="M136.2 243.2h2.500" stroke="#fff" stroke-width="1.400"/><path d="M198.1 371.0h2.500" stroke="#fff" stroke-width="1.400"/><path d="M245.0 301.3h2.500" stroke="#fff" stroke-width="1.400"/><path d="M294.6 330.5h2.500" stroke="#fff" stroke-width="1.400"/><path d="M324.5 310.6h2.500" stroke="#fff" stroke-width="1.400"/><path d="M339.4 314.4h2.500" stroke="#fff" stroke-width="1.400"/><path d="M403.3 252.8h2.500" stroke="#fff" stroke-width="1.400"/><path d="M466.2 277.5h2.500" stroke="#fff" stroke-width="1.400"/><path d="M482.3 274.1h2.500" stroke="#fff" stroke-width="1.400"/><path d="M503.5 277.5h2.500" stroke="#fff" stroke-width="1.400"/><path d="M530.1 264.1h2.500" stroke="#fff" stroke-width="1.400"/><path d="M535.9 264.8h2.500" stroke="#fff" stroke-width="1.400"/><path d="M665.0 138.3h2.500" stroke="#fff" stroke-width="1.400"/><path d="M698.8 152.3h2.500" stroke="#fff" stroke-width="1.400"/><path d="M770.1 116.6h2.500" stroke="#fff" stroke-width="1.400"/><path d="M831.6 186.8h2.500" stroke="#fff" stroke-width="1.400"/><path d="M801.7 160.2h2.500" stroke="#fff" stroke-width="1.400"/><path d="M127.5 261.5V243.4M119.0 252.4L127.5 243.3L136.0 252.4" fill="none" stroke="#00ffff" stroke-width="2.450"/><path d="M223.7 301.3V283.2M215.2 292.2L223.7 283.1L232.2 292.2" fill="none" stroke="#00ffff" stroke-width="2.450"/><path d="M356.4 303.0V285.8M347.9 294.8L356.4 285.7L364.9 294.8" fill="none" stroke="#00ffff" stroke-width="2.450"/><path d="M516.4 278.0V260.0M507.9 269.0L516.4 259.9L524.9 269.0" fill="none" stroke="#00ffff" stroke-width="2.450"/><path d="M706.1 159.7V141.6M697.6 150.6L706.1 141.5L714.6 150.6" fill="none" stroke="#00ffff" stroke-width="2.450"/><path d="M857.2 157.4V141.8M848.7 150.8L857.2 141.7L865.7 150.8" fill="none" stroke="#00ffff" stroke-width="2.450"/><path d="M142.4 253.0V269.6M133.9 260.6L142.4 269.7L150.9 260.6" fill="none" stroke="#ffc800" stroke-width="2.450"/><path d="M251.1 317.2V336.3M242.6 327.3L251.1 336.4L259.6 327.3" fill="none" stroke="#ffc800" stroke-width="2.450"/><path d="M431.9 248.0V266.4M423.4 257.4L431.9 266.5L440.4 257.4" fill="none" stroke="#ffc800" stroke-width="2.450"/><path d="M697.0 134.8V153.0M688.5 144.0L697.0 153.1L705.5 144.0" fill="none" stroke="#ffc800" stroke-width="2.450"/><path d="M775.8 138.8V157.9M767.3 148.9L775.8 158.0L784.3 148.9" fill="none" stroke="#ffc800" stroke-width="2.450"/><circle cx="143.7" cy="244.9" r="6.700" fill="none" stroke="#ffc800" stroke-width="1.450"/><circle cx="143.7" cy="244.9" r="2.350" fill="#ffc800"/><circle cx="269.9" cy="296.0" r="6.700" fill="none" stroke="#ffc800" stroke-width="1.450"/><circle cx="269.9" cy="296.0" r="2.350" fill="#ffc800"/><circle cx="498.9" cy="261.4" r="6.700" fill="none" stroke="#ffc800" stroke-width="1.450"/><circle cx="498.9" cy="261.4" r="2.350" fill="#ffc800"/><circle cx="516.7" cy="277.7" r="6.700" fill="none" stroke="#00ffff" stroke-width="1.450"/><circle cx="516.7" cy="277.7" r="2.350" fill="#00ffff"/><circle cx="857.4" cy="157.2" r="6.700" fill="none" stroke="#00ffff" stroke-width="1.450"/><circle cx="857.4" cy="157.2" r="2.350" fill="#00ffff"/><circle cx="858.200" cy="156.700" r="16.900" fill="none" stroke="#ff0000" stroke-width="3.600"/><path d="M864.800 164.200L890.500 111" stroke="#ff0000" stroke-width="3.700"/><path d="M894.900 102.600L886.400 107.800L895.800 112.900z" fill="#ff0000" stroke="#ff0000" stroke-width="1"/><path d="M4.5 445.5V455.1M7.5 445.5V460.9M10.5 445.5V469.2M13.5 445.5V475.0M16.6 445.5V478.4M19.6 445.5V478.4M22.6 445.5V473.4M25.6 445.5V472.6M28.6 445.5V474.2M31.6 445.5V475.9M34.7 445.5V476.7M37.7 445.5V477.5M40.7 445.5V483.3M43.7 445.5V488.0M46.7 445.5V489.7M49.7 445.5V493.3M52.7 445.5V495.0M55.8 445.5V493.3M58.8 445.5V490.0M61.8 445.5V489.2M73.9 445.5V491.6M76.9 445.5V493.3M79.9 445.5V495.3M82.9 445.5V495.0M85.9 445.5V491.6M140.2 445.5V457.6M143.2 445.5V461.8M146.2 445.5V463.4M149.2 445.5V467.6M152.3 445.5V467.6M155.3 445.5V475.9M158.3 445.5V484.2M161.3 445.5V491.6M164.3 445.5V497.0M167.3 445.5V502.8M170.4 445.5V506.6M173.4 445.5V509.4M176.4 445.5V513.2M179.4 445.5V514.1M182.4 445.5V509.1M185.4 445.5V505.8M245.7 445.5V449.3M248.8 445.5V454.8M251.8 445.5V458.4M254.8 445.5V456.8M257.8 445.5V454.8M260.8 445.5V454.3M263.8 445.5V455.5M266.9 445.5V458.4M269.9 445.5V457.6M272.9 445.5V459.6M275.9 445.5V460.1M330.2 445.5V446.3M333.2 445.5V448.8M336.2 445.5V447.5M339.2 445.5V447.2M462.9 445.5V446.0M496.0 445.5V447.5M499.1 445.5V448.8M502.1 445.5V446.3M779.5 445.5V454.1M782.5 445.5V460.8M785.5 445.5V466.7M788.6 445.5V467.1M791.6 445.5V464.6M794.6 445.5V462.1M797.6 445.5V457.1M812.7 445.5V459.6M815.7 445.5V464.6M818.7 445.5V468.7M821.7 445.5V470.7M824.7 445.5V472.4M827.8 445.5V468.7M830.8 445.5V464.6" stroke="#b00000" stroke-width="1.100"/><path d="M64.8 445.5V488.3M67.8 445.5V488.3M70.8 445.5V490.0M88.9 445.5V490.8M92.0 445.5V488.3M95.0 445.5V484.2M98.0 445.5V480.0M101.0 445.5V475.9M104.0 445.5V473.4M107.0 445.5V470.9M110.0 445.5V467.6M113.1 445.5V464.3M116.1 445.5V458.4M119.1 445.5V456.0M122.1 445.5V451.8M125.1 445.5V447.7M128.1 445.5V446.8M131.2 445.5V446.2M134.2 445.5V446.5M137.2 445.5V447.2M188.5 445.5V501.6M191.5 445.5V500.8M194.5 445.5V499.1M197.5 445.5V495.3M200.5 445.5V485.8M203.5 445.5V478.7M206.5 445.5V475.9M209.6 445.5V477.5M212.6 445.5V473.4M215.6 445.5V465.1M218.6 445.5V460.1M221.6 445.5V447.7M278.9 445.5V456.8M281.9 445.5V453.8M285.0 445.5V451.0M288.0 445.5V449.3M291.0 445.5V451.0M294.0 445.5V451.0M297.0 445.5V448.8M324.2 445.5V440.9M327.2 445.5V443.8M378.4 445.5V422.3M381.4 445.5V424.7M384.5 445.5V424.7M387.5 445.5V423.1M390.5 445.5V421.4M402.6 445.5V422.3M405.6 445.5V424.7M408.6 445.5V428.1M411.6 445.5V430.9M414.6 445.5V432.2M417.6 445.5V432.2M420.7 445.5V433.0M423.7 445.5V435.2M426.7 445.5V435.9M429.7 445.5V438.0M432.7 445.5V438.2M435.7 445.5V438.0M438.7 445.5V439.7M441.8 445.5V438.2M444.8 445.5V441.3M447.8 445.5V440.9M450.8 445.5V441.8M453.8 445.5V443.0M456.8 445.5V444.7M465.9 445.5V443.8M481.0 445.5V443.8M484.0 445.5V444.5M487.0 445.5V444.8M490.0 445.5V445.0M532.2 445.5V441.8M535.2 445.5V443.5M565.4 445.5V416.4M568.4 445.5V418.1M571.4 445.5V416.9M574.4 445.5V416.4M577.5 445.5V414.8M610.6 445.5V412.0M613.7 445.5V413.1M616.7 445.5V413.1M619.7 445.5V414.0M622.7 445.5V412.3M625.7 445.5V412.3M628.7 445.5V413.1M655.9 445.5V407.7M658.9 445.5V409.0M661.9 445.5V413.1M664.9 445.5V415.6M667.9 445.5V419.3M670.9 445.5V423.1M674.0 445.5V425.6M677.0 445.5V426.1M680.0 445.5V424.7M683.0 445.5V425.2M686.0 445.5V427.6M689.0 445.5V428.9M692.1 445.5V432.2M695.1 445.5V435.9M698.1 445.5V435.5M701.1 445.5V436.9M704.1 445.5V432.6M719.2 445.5V433.5M722.2 445.5V433.9M725.2 445.5V433.5M728.2 445.5V432.6M731.3 445.5V433.9M734.3 445.5V433.5M737.3 445.5V433.9M740.3 445.5V433.9M770.5 445.5V424.7M773.5 445.5V432.2M776.5 445.5V441.8M800.6 445.5V453.5M803.6 445.5V448.8M806.6 445.5V449.2M809.7 445.5V453.8M833.8 445.5V462.9M836.8 445.5V460.8M839.8 445.5V455.8M842.8 445.5V451.3M845.9 445.5V448.5" stroke="#9e9e9e" stroke-width="1.100"/><path d="M224.6 445.5V441.0M227.7 445.5V438.9M230.7 445.5V438.2M233.7 445.5V438.5M236.7 445.5V440.7M239.7 445.5V442.7M303.0 445.5V444.7M306.1 445.5V442.7M309.1 445.5V438.9M312.1 445.5V436.5M315.1 445.5V437.4M318.1 445.5V437.4M321.1 445.5V440.2M342.2 445.5V444.3M345.3 445.5V439.2M348.3 445.5V436.4M351.3 445.5V434.7M354.3 445.5V430.2M357.3 445.5V425.6M360.3 445.5V420.6M363.4 445.5V418.1M366.4 445.5V415.3M369.4 445.5V412.6M372.4 445.5V414.8M375.4 445.5V420.6M393.5 445.5V418.9M396.5 445.5V412.6M399.5 445.5V417.3M468.9 445.5V443.8M471.9 445.5V440.9M474.9 445.5V443.8M477.9 445.5V444.2M511.1 445.5V445.0M514.1 445.5V441.3M517.2 445.5V436.9M520.2 445.5V433.9M523.2 445.5V433.9M526.2 445.5V436.0M529.2 445.5V439.7M538.3 445.5V438.9M541.3 445.5V428.6M544.3 445.5V420.3M547.3 445.5V412.3M550.3 445.5V411.8M553.3 445.5V408.6M556.4 445.5V408.1M559.4 445.5V410.3M562.4 445.5V413.6M580.5 445.5V414.3M583.5 445.5V412.0M586.5 445.5V412.0M589.5 445.5V415.3M592.5 445.5V415.3M595.6 445.5V412.3M598.6 445.5V409.8M601.6 445.5V408.1M604.6 445.5V408.6M607.6 445.5V409.0M631.7 445.5V412.3M634.8 445.5V412.3M637.8 445.5V407.0M640.8 445.5V403.2M643.8 445.5V402.7M646.8 445.5V402.0M649.8 445.5V404.0M652.9 445.5V406.0M707.1 445.5V430.6M710.2 445.5V432.6M713.2 445.5V433.5M716.2 445.5V433.5M743.3 445.5V430.9M746.3 445.5V428.6M749.4 445.5V424.3M752.4 445.5V423.1M755.4 445.5V421.8M758.4 445.5V422.6M761.4 445.5V423.1M764.4 445.5V425.2M767.4 445.5V424.7M851.9 445.5V441.3M854.9 445.5V436.0M857.9 445.5V433.9M860.9 445.5V430.9M863.9 445.5V428.6M867.0 445.5V425.6M870.0 445.5V424.7M873.0 445.5V423.1M876.0 445.5V420.9M879.0 445.5V418.1M882.0 445.5V414.8" stroke="#0000b8" stroke-width="1.100"/><path d="M4.0 446.0 L8.3 451.8 L13.3 457.6 L18.3 463.4 L23.2 467.6 L28.2 471.7 L33.2 475.0 L38.2 476.7 L43.2 478.4 L48.1 480.0 L53.1 484.2 L58.1 487.5 L63.1 490.0 L66.4 490.8 L73.0 491.3 L79.7 491.6 L86.3 492.0 L93.0 491.6 L97.9 490.0 L102.9 486.7 L107.9 482.5 L112.9 477.5 L117.9 471.7 L122.8 465.9 L127.8 460.1 L132.8 455.1 L136.1 452.6 L140.3 451.0 L144.4 451.8 L149.4 453.8 L154.4 457.6 L159.4 464.3 L165.0 475.9 L170.0 484.2 L174.9 493.3 L179.9 500.8 L184.9 505.8 L191.5 507.9 L196.5 506.3 L201.5 502.4 L206.5 495.0 L211.5 489.2 L216.4 482.5 L221.4 474.2 L226.4 463.4 L231.4 455.1 L236.4 448.5 L241.3 443.5 L246.3 441.5 L251.3 444.3 L256.3 447.7 L261.3 451.0 L266.2 453.8 L271.2 456.5 L276.2 458.1 L282.8 457.6 L287.8 456.5 L292.8 455.5 L297.8 453.1 L302.8 450.1 L307.7 447.7 L312.7 444.8 L317.7 442.2 L323.3 439.7 L330.0 439.2 L334.9 440.9 L339.9 443.5 L344.1 444.3 L349.9 442.7 L354.9 440.2 L359.8 436.4 L364.8 430.9 L369.8 424.7 L374.8 420.6 L378.1 419.3 L384.7 418.1 L389.7 419.3 L396.4 420.1 L403.0 420.6 L409.6 420.6 L414.6 422.3 L419.6 424.7 L424.6 428.6 L429.6 431.4 L436.2 434.7 L442.8 436.9 L449.5 438.5 L456.1 440.2 L461.1 441.8 L464.4 443.0 L469.4 443.5 L479.4 443.5 L493.3 443.3 L498.3 444.7 L504.9 445.2 L509.9 446.0 L513.2 445.5 L518.2 443.5 L523.2 441.3 L528.1 439.2 L533.1 438.5 L538.1 438.0 L543.1 435.5 L548.1 431.4 L553.0 426.4 L558.0 420.6 L563.0 415.6 L566.3 413.1 L571.3 412.0 L576.3 413.1 L582.9 414.3 L592.9 414.3 L597.9 412.3 L602.8 411.0 L609.5 410.6 L622.8 410.6 L629.4 412.0 L636.0 412.3 L640.0 411.0 L645.0 408.6 L650.0 406.5 L654.9 405.2 L661.6 405.2 L666.6 407.7 L673.2 412.3 L679.8 417.6 L686.5 422.3 L693.1 426.4 L698.1 428.9 L703.1 430.9 L709.7 431.9 L716.4 432.6 L726.3 432.2 L736.3 432.6 L742.9 432.2 L749.6 430.6 L756.2 428.1 L762.8 425.6 L767.8 423.6 L771.1 423.1 L775.3 424.7 L779.4 429.7 L784.4 437.2 L789.4 445.5 L794.2 454.1 L798.3 458.8 L803.3 460.4 L806.6 460.3 L811.6 457.8 L816.6 457.8 L821.5 459.1 L826.5 461.6 L831.5 464.9 L837.3 467.1 L841.5 465.8 L846.4 461.6 L851.4 455.8 L856.4 449.2 L861.4 443.3 L866.4 437.5 L871.3 432.6 L876.3 427.9 L881.3 425.1" fill="none" stroke="#00aa00" stroke-width="1.150" stroke-linejoin="round"/><rect x="4.5" y="595" width="17.5" height="5" fill="#ffd700"/><rect x="23.4" y="595" width="71.2" height="5" fill="#ffd700"/><rect x="101.3" y="595" width="8.3" height="5" fill="#ffd700"/><rect x="110.4" y="595" width="21.6" height="5" fill="#00ffff"/><rect x="132.0" y="595" width="56.0" height="5" fill="#ffd700"/><rect x="189.4" y="595" width="10.5" height="5" fill="#ffd700"/><rect x="199.9" y="595" width="7.4" height="5" fill="#00ffff"/><rect x="207.3" y="595" width="4.7" height="5" fill="#ffd700"/><rect x="212.0" y="595" width="22.2" height="5" fill="#00ffff"/><rect x="234.2" y="595" width="19.9" height="5" fill="#ffd700"/><rect x="254.1" y="595" width="2.7" height="5" fill="#00ffff"/><rect x="258.5" y="595" width="19.9" height="5" fill="#ffd700"/><rect x="278.4" y="595" width="10.3" height="5" fill="#00ffff"/><rect x="288.7" y="595" width="7.8" height="5" fill="#ffd700"/><rect x="296.5" y="595" width="5.6" height="5" fill="#00ffff"/><rect x="303.4" y="595" width="9.3" height="5" fill="#00ffff"/><rect x="312.7" y="595" width="4.7" height="5" fill="#ffd700"/><rect x="317.4" y="595" width="1.1" height="5" fill="#00ffff"/><rect x="318.5" y="595" width="17.3" height="5" fill="#ffd700"/><rect x="335.8" y="595" width="1.2" height="5" fill="#00ffff"/><rect x="337.0" y="595" width="4.6" height="5" fill="#ffd700"/><rect x="341.6" y="595" width="11.6" height="5" fill="#00ffff"/><rect x="354.9" y="595" width="17.9" height="5" fill="#00ffff"/><rect x="372.8" y="595" width="7.8" height="5" fill="#ffd700"/><rect x="380.6" y="595" width="16.3" height="5" fill="#00ffff"/><rect x="396.9" y="595" width="16.9" height="5" fill="#ffd700"/><rect x="413.8" y="595" width="7.2" height="5" fill="#00ffff"/><rect x="421.0" y="595" width="5.0" height="5" fill="#ffd700"/><rect x="427.1" y="595" width="4.7" height="5" fill="#ffd700"/><rect x="433.3" y="595" width="7.6" height="5" fill="#ffd700"/><rect x="442.4" y="595" width="4.6" height="5" fill="#ffd700"/><rect x="448.4" y="595" width="16.4" height="5" fill="#ffd700"/><rect x="464.8" y="595" width="8.0" height="5" fill="#00ffff"/><rect x="472.8" y="595" width="16.6" height="5" fill="#ffd700"/><rect x="489.4" y="595" width="1.3" height="5" fill="#00ffff"/><rect x="490.7" y="595" width="10.9" height="5" fill="#ffd700"/><rect x="514.6" y="595" width="9.1" height="5" fill="#00ffff"/><rect x="523.7" y="595" width="13.6" height="5" fill="#ffd700"/><rect x="537.3" y="595" width="22.4" height="5" fill="#00ffff"/><rect x="559.7" y="595" width="5.0" height="5" fill="#ffd700"/><rect x="564.7" y="595" width="20.8" height="5" fill="#00ffff"/><rect x="592.9" y="595" width="66.1" height="5" fill="#00ffff"/><rect x="659.0" y="595" width="4.7" height="5" fill="#ffd700"/><rect x="663.7" y="595" width="1.3" height="5" fill="#00ffff"/><rect x="665.0" y="595" width="11.1" height="5" fill="#ffd700"/><rect x="683.2" y="595" width="5.0" height="5" fill="#ffd700"/><rect x="689.5" y="595" width="7.5" height="5" fill="#ffd700"/><rect x="698.5" y="595" width="5.0" height="5" fill="#ffd700"/><rect x="703.5" y="595" width="7.1" height="5" fill="#00ffff"/><rect x="710.6" y="595" width="5.0" height="5" fill="#ffd700"/><rect x="715.6" y="595" width="1.4" height="5" fill="#00ffff"/><rect x="717.0" y="595" width="4.8" height="5" fill="#ffd700"/><rect x="725.2" y="595" width="45.7" height="5" fill="#00ffff"/><rect x="770.9" y="595" width="19.9" height="5" fill="#ffd700"/><rect x="804.1" y="595" width="22.5" height="5" fill="#ffd700"/><rect x="826.6" y="595" width="5.9" height="5" fill="#00ffff"/><rect x="834.1" y="595" width="5.0" height="5" fill="#ffd700"/><rect x="849.0" y="595" width="34.9" height="5" fill="#00ffff"/><rect x="4.5" y="611.200" width="101.5" height="6" fill="#d80000"/><rect x="106.0" y="611.200" width="5.0" height="6" fill="#c00018"/><path d="M106.6 614.200H111.0" stroke="#1010d0" stroke-width="4.600" stroke-dasharray="1.300 1.716"/><rect x="111.0" y="611.200" width="25.0" height="6" fill="#0000d8"/><rect x="136.0" y="611.200" width="5.0" height="6" fill="#c00018"/><path d="M136.6 614.200H141.0" stroke="#1010d0" stroke-width="4.600" stroke-dasharray="1.300 1.716"/><rect x="141.0" y="611.200" width="56.4" height="6" fill="#d80000"/><rect x="197.4" y="611.200" width="4.1" height="6" fill="#c00018"/><path d="M198.0 614.200H201.5" stroke="#1010d0" stroke-width="4.600" stroke-dasharray="1.300 1.716"/><rect x="201.5" y="611.200" width="37.4" height="6" fill="#0000d8"/><rect x="238.9" y="611.200" width="14.9" height="6" fill="#c00018"/><path d="M239.5 614.200H253.8" stroke="#1010d0" stroke-width="4.600" stroke-dasharray="1.300 1.716"/><rect x="253.8" y="611.200" width="24.9" height="6" fill="#d80000"/><rect x="278.7" y="611.200" width="4.2" height="6" fill="#c00018"/><path d="M279.3 614.200H282.9" stroke="#1010d0" stroke-width="4.600" stroke-dasharray="1.300 1.716"/><rect x="282.9" y="611.200" width="34.0" height="6" fill="#0000d8"/><rect x="316.9" y="611.200" width="26.4" height="6" fill="#c00018"/><path d="M317.5 614.200H343.3" stroke="#1010d0" stroke-width="4.600" stroke-dasharray="1.300 1.716"/><rect x="343.3" y="611.200" width="52.3" height="6" fill="#0000d8"/><rect x="395.6" y="611.200" width="3.4" height="6" fill="#c00018"/><path d="M396.2 614.200H399.0" stroke="#1010d0" stroke-width="4.600" stroke-dasharray="1.300 1.716"/><rect x="399.0" y="611.200" width="13.0" height="6" fill="#d80000"/><rect x="412.0" y="611.200" width="3.5" height="6" fill="#c00018"/><path d="M412.6 614.200H415.5" stroke="#1010d0" stroke-width="4.600" stroke-dasharray="1.300 1.716"/><rect x="415.5" y="611.200" width="10.5" height="6" fill="#0000d8"/><rect x="426.0" y="611.200" width="3.0" height="6" fill="#c00018"/><path d="M426.6 614.200H429.0" stroke="#1010d0" stroke-width="4.600" stroke-dasharray="1.300 1.716"/><rect x="429.0" y="611.200" width="14.0" height="6" fill="#d80000"/><rect x="443.0" y="611.200" width="6.2" height="6" fill="#c00018"/><path d="M443.6 614.200H449.2" stroke="#1010d0" stroke-width="4.600" stroke-dasharray="1.300 1.716"/><rect x="449.2" y="611.200" width="3.6" height="6" fill="#0000d8"/><rect x="452.8" y="611.200" width="14.2" height="6" fill="#c00018"/><path d="M453.4 614.200H467.0" stroke="#1010d0" stroke-width="4.600" stroke-dasharray="1.300 1.716"/><rect x="467.0" y="611.200" width="4.1" height="6" fill="#0000d8"/><rect x="471.1" y="611.200" width="14.9" height="6" fill="#c00018"/><path d="M471.7 614.200H486.0" stroke="#1010d0" stroke-width="4.600" stroke-dasharray="1.300 1.716"/><rect x="486.0" y="611.200" width="16.5" height="6" fill="#d80000"/><rect x="502.5" y="611.200" width="12.5" height="6" fill="#c00018"/><path d="M503.1 614.200H515.0" stroke="#1010d0" stroke-width="4.600" stroke-dasharray="1.300 1.716"/><rect x="515.0" y="611.200" width="9.9" height="6" fill="#0000d8"/><rect x="524.9" y="611.200" width="11.1" height="6" fill="#c00018"/><path d="M525.5 614.200H536.0" stroke="#1010d0" stroke-width="4.600" stroke-dasharray="1.300 1.716"/><rect x="536.0" y="611.200" width="49.5" height="6" fill="#0000d8"/><rect x="585.5" y="611.200" width="8.3" height="6" fill="#c00018"/><path d="M586.1 614.200H593.8" stroke="#1010d0" stroke-width="4.600" stroke-dasharray="1.300 1.716"/><rect x="593.8" y="611.200" width="82.0" height="6" fill="#0000d8"/><rect x="675.8" y="611.200" width="4.2" height="6" fill="#c00018"/><path d="M676.4 614.200H680.0" stroke="#1010d0" stroke-width="4.600" stroke-dasharray="1.300 1.716"/><rect x="680.0" y="611.200" width="21.0" height="6" fill="#d80000"/><rect x="701.0" y="611.200" width="3.8" height="6" fill="#c00018"/><path d="M701.6 614.200H704.8" stroke="#1010d0" stroke-width="4.600" stroke-dasharray="1.300 1.716"/><rect x="704.8" y="611.200" width="13.3" height="6" fill="#0000d8"/><rect x="718.1" y="611.200" width="7.9" height="6" fill="#c00018"/><path d="M718.7 614.200H726.0" stroke="#1010d0" stroke-width="4.600" stroke-dasharray="1.300 1.716"/><rect x="726.0" y="611.200" width="43.2" height="6" fill="#0000d8"/><rect x="769.2" y="611.200" width="3.8" height="6" fill="#c00018"/><path d="M769.8 614.200H773.0" stroke="#1010d0" stroke-width="4.600" stroke-dasharray="1.300 1.716"/><rect x="773.0" y="611.200" width="43.9" height="6" fill="#d80000"/><rect x="816.9" y="611.200" width="12.1" height="6" fill="#c00018"/><path d="M817.5 614.200H829.0" stroke="#1010d0" stroke-width="4.600" stroke-dasharray="1.300 1.716"/><rect x="829.0" y="611.200" width="20.9" height="6" fill="#d80000"/><rect x="849.9" y="611.200" width="35.7" height="6" fill="#0000d8"/><path d="M4.500 614.200H885.600" stroke="#000" stroke-opacity="0.280" stroke-width="2.400" stroke-dasharray="1.500 1.516"/><path d="M4.80 571.900l2.600 3.200m0 -3.200l-2.600 3.200M7.82 571.900l2.600 3.200m0 -3.200l-2.600 3.200M10.83 571.900l2.600 3.200m0 -3.200l-2.600 3.200M13.85 571.900l2.600 3.200m0 -3.200l-2.600 3.200M16.86 571.900l2.600 3.200m0 -3.200l-2.600 3.200" fill="none" stroke="#ffd700" stroke-width="0.950"/><path d="M39.20 571.900l2.600 3.200m0 -3.200l-2.600 3.200M42.22 571.900l2.600 3.200m0 -3.200l-2.600 3.200M45.23 571.900l2.600 3.200m0 -3.200l-2.600 3.200M48.25 571.900l2.600 3.200m0 -3.200l-2.600 3.200M51.26 571.900l2.600 3.200m0 -3.200l-2.600 3.200M54.28 571.900l2.600 3.200m0 -3.200l-2.600 3.200" fill="none" stroke="#ffd700" stroke-width="0.950"/><path d="M75.20 571.900l2.600 3.200m0 -3.200l-2.600 3.200M78.22 571.900l2.600 3.200m0 -3.200l-2.600 3.200M81.23 571.900l2.600 3.200m0 -3.200l-2.600 3.200" fill="none" stroke="#ffd700" stroke-width="0.950"/><path d="M114.20 571.900l2.600 3.200m0 -3.200l-2.600 3.200M117.22 571.900l2.600 3.200m0 -3.200l-2.600 3.200M120.23 571.900l2.600 3.200m0 -3.200l-2.600 3.200M123.25 571.900l2.600 3.200m0 -3.200l-2.600 3.200" fill="none" stroke="#00ffff" stroke-width="0.950"/><path d="M129.70 571.900l2.600 3.200m0 -3.200l-2.600 3.200" fill="none" stroke="#00ffff" stroke-width="0.950"/><path d="M138.20 571.900l2.600 3.200m0 -3.200l-2.600 3.200M141.22 571.900l2.600 3.200m0 -3.200l-2.600 3.200M144.23 571.900l2.600 3.200m0 -3.200l-2.600 3.200M147.25 571.900l2.600 3.200m0 -3.200l-2.600 3.200M150.26 571.900l2.600 3.200m0 -3.200l-2.600 3.200M153.28 571.900l2.600 3.200m0 -3.200l-2.600 3.200M156.29 571.900l2.600 3.200m0 -3.200l-2.600 3.200M159.31 571.900l2.600 3.200m0 -3.200l-2.600 3.200M162.32 571.900l2.600 3.200m0 -3.200l-2.600 3.200M165.34 571.900l2.600 3.200m0 -3.200l-2.600 3.200M168.36 571.900l2.600 3.200m0 -3.200l-2.600 3.200M171.37 571.900l2.600 3.200m0 -3.200l-2.600 3.200M174.39 571.900l2.600 3.200m0 -3.200l-2.600 3.200M177.40 571.900l2.600 3.200m0 -3.200l-2.600 3.200" fill="none" stroke="#ffd700" stroke-width="0.950"/><path d="M198.90 571.900l2.600 3.200m0 -3.200l-2.600 3.200M201.92 571.900l2.600 3.200m0 -3.200l-2.600 3.200" fill="none" stroke="#00ffff" stroke-width="0.950"/><path d="M213.70 571.900l2.600 3.200m0 -3.200l-2.600 3.200M216.72 571.900l2.600 3.200m0 -3.200l-2.600 3.200M219.73 571.900l2.600 3.200m0 -3.200l-2.600 3.200M222.75 571.900l2.600 3.200m0 -3.200l-2.600 3.200M225.76 571.900l2.600 3.200m0 -3.200l-2.600 3.200" fill="none" stroke="#00ffff" stroke-width="0.950"/><path d="M234.90 571.900l2.600 3.200m0 -3.200l-2.600 3.200M237.92 571.900l2.600 3.200m0 -3.200l-2.600 3.200M240.93 571.900l2.600 3.200m0 -3.200l-2.600 3.200M243.95 571.900l2.600 3.200m0 -3.200l-2.600 3.200M246.96 571.900l2.600 3.200m0 -3.200l-2.600 3.200M249.98 571.900l2.600 3.200m0 -3.200l-2.600 3.200M252.99 571.900l2.600 3.200m0 -3.200l-2.600 3.200" fill="none" stroke="#ffd700" stroke-width="0.950"/><path d="M262.20 571.900l2.600 3.200m0 -3.200l-2.600 3.200M265.22 571.900l2.600 3.200m0 -3.200l-2.600 3.200M268.23 571.900l2.600 3.200m0 -3.200l-2.600 3.200M271.25 571.900l2.600 3.200m0 -3.200l-2.600 3.200M274.26 571.900l2.600 3.200m0 -3.200l-2.600 3.200" fill="none" stroke="#ffd700" stroke-width="0.950"/><path d="M277.20 571.900l2.600 3.200m0 -3.200l-2.600 3.200M280.22 571.900l2.600 3.200m0 -3.200l-2.600 3.200M283.23 571.900l2.600 3.200m0 -3.200l-2.600 3.200M286.25 571.900l2.600 3.200m0 -3.200l-2.600 3.200" fill="none" stroke="#00ffff" stroke-width="0.950"/><path d="M298.00 571.900l2.600 3.200m0 -3.200l-2.600 3.200M301.02 571.900l2.600 3.200m0 -3.200l-2.600 3.200M304.03 571.900l2.600 3.200m0 -3.200l-2.600 3.200M307.05 571.900l2.600 3.200m0 -3.200l-2.600 3.200M310.06 571.900l2.600 3.200m0 -3.200l-2.600 3.200M313.08 571.900l2.600 3.200m0 -3.200l-2.600 3.200M316.09 571.900l2.600 3.200m0 -3.200l-2.600 3.200" fill="none" stroke="#00ffff" stroke-width="0.950"/><path d="M318.80 571.900l2.600 3.200m0 -3.200l-2.600 3.200M321.82 571.900l2.600 3.200m0 -3.200l-2.600 3.200M324.83 571.900l2.600 3.200m0 -3.200l-2.600 3.200M327.85 571.900l2.600 3.200m0 -3.200l-2.600 3.200M330.86 571.900l2.600 3.200m0 -3.200l-2.600 3.200" fill="none" stroke="#ffd700" stroke-width="0.950"/><path d="M337.70 571.900l2.600 3.200m0 -3.200l-2.600 3.200" fill="none" stroke="#ffd700" stroke-width="0.950"/><path d="M340.20 571.900l2.600 3.200m0 -3.200l-2.600 3.200M343.22 571.900l2.600 3.200m0 -3.200l-2.600 3.200M346.23 571.900l2.600 3.200m0 -3.200l-2.600 3.200M349.25 571.900l2.600 3.200m0 -3.200l-2.600 3.200M352.26 571.900l2.600 3.200m0 -3.200l-2.600 3.200M355.28 571.900l2.600 3.200m0 -3.200l-2.600 3.200M358.29 571.900l2.600 3.200m0 -3.200l-2.600 3.200M361.31 571.900l2.600 3.200m0 -3.200l-2.600 3.200M364.32 571.900l2.600 3.200m0 -3.200l-2.600 3.200M367.34 571.900l2.600 3.200m0 -3.200l-2.600 3.200M370.36 571.900l2.600 3.200m0 -3.200l-2.600 3.200" fill="none" stroke="#00ffff" stroke-width="0.950"/><path d="M391.60 571.900l2.600 3.200m0 -3.200l-2.600 3.200M394.62 571.900l2.600 3.200m0 -3.200l-2.600 3.200M397.63 571.900l2.600 3.200m0 -3.200l-2.600 3.200" fill="none" stroke="#00ffff" stroke-width="0.950"/><path d="M427.80 571.900l2.600 3.200m0 -3.200l-2.600 3.200" fill="none" stroke="#ffd700" stroke-width="0.950"/><path d="M436.90 571.900l2.600 3.200m0 -3.200l-2.600 3.200" fill="none" stroke="#ffd700" stroke-width="0.950"/><path d="M440.60 571.900l2.600 3.200m0 -3.200l-2.600 3.200" fill="none" stroke="#00ffff" stroke-width="0.950"/><path d="M443.10 571.900l2.600 3.200m0 -3.200l-2.600 3.200" fill="none" stroke="#ffd700" stroke-width="0.950"/><path d="M449.10 571.900l2.600 3.200m0 -3.200l-2.600 3.200" fill="none" stroke="#ffd700" stroke-width="0.950"/><path d="M455.00 571.900l2.600 3.200m0 -3.200l-2.600 3.200M458.02 571.900l2.600 3.200m0 -3.200l-2.600 3.200M461.03 571.900l2.600 3.200m0 -3.200l-2.600 3.200" fill="none" stroke="#ffd700" stroke-width="0.950"/><path d="M464.70 571.900l2.600 3.200m0 -3.200l-2.600 3.200M467.72 571.900l2.600 3.200m0 -3.200l-2.600 3.200M470.73 571.900l2.600 3.200m0 -3.200l-2.600 3.200" fill="none" stroke="#00ffff" stroke-width="0.950"/><path d="M482.10 571.900l2.600 3.200m0 -3.200l-2.600 3.200M485.12 571.900l2.600 3.200m0 -3.200l-2.600 3.200" fill="none" stroke="#ffd700" stroke-width="0.950"/><path d="M491.60 571.900l2.600 3.200m0 -3.200l-2.600 3.200M494.62 571.900l2.600 3.200m0 -3.200l-2.600 3.200M497.63 571.900l2.600 3.200m0 -3.200l-2.600 3.200" fill="none" stroke="#ffd700" stroke-width="0.950"/><path d="M512.60 571.900l2.600 3.200m0 -3.200l-2.600 3.200M515.62 571.900l2.600 3.200m0 -3.200l-2.600 3.200M518.63 571.900l2.600 3.200m0 -3.200l-2.600 3.200" fill="none" stroke="#00ffff" stroke-width="0.950"/><path d="M527.60 571.900l2.600 3.200m0 -3.200l-2.600 3.200M530.62 571.900l2.600 3.200m0 -3.200l-2.600 3.200M533.63 571.900l2.600 3.200m0 -3.200l-2.600 3.200" fill="none" stroke="#ffd700" stroke-width="0.950"/><path d="M536.70 571.900l2.600 3.200m0 -3.200l-2.600 3.200M539.72 571.900l2.600 3.200m0 -3.200l-2.600 3.200M542.73 571.900l2.600 3.200m0 -3.200l-2.600 3.200M545.75 571.900l2.600 3.200m0 -3.200l-2.600 3.200M548.76 571.900l2.600 3.200m0 -3.200l-2.600 3.200M551.78 571.900l2.600 3.200m0 -3.200l-2.600 3.200M554.79 571.900l2.600 3.200m0 -3.200l-2.600 3.200M557.81 571.900l2.600 3.200m0 -3.200l-2.600 3.200" fill="none" stroke="#00ffff" stroke-width="0.950"/><path d="M578.50 571.900l2.600 3.200m0 -3.200l-2.600 3.200M581.52 571.900l2.600 3.200m0 -3.200l-2.600 3.200M584.53 571.900l2.600 3.200m0 -3.200l-2.600 3.200" fill="none" stroke="#00ffff" stroke-width="0.950"/><path d="M593.50 571.900l2.600 3.200m0 -3.200l-2.600 3.200M596.52 571.900l2.600 3.200m0 -3.200l-2.600 3.200M599.53 571.900l2.600 3.200m0 -3.200l-2.600 3.200M602.55 571.900l2.600 3.200m0 -3.200l-2.600 3.200" fill="none" stroke="#00ffff" stroke-width="0.950"/><path d="M629.70 571.900l2.600 3.200m0 -3.200l-2.600 3.200M632.72 571.900l2.600 3.200m0 -3.200l-2.600 3.200M635.73 571.900l2.600 3.200m0 -3.200l-2.600 3.200M638.75 571.900l2.600 3.200m0 -3.200l-2.600 3.200M641.76 571.900l2.600 3.200m0 -3.200l-2.600 3.200M644.78 571.900l2.600 3.200m0 -3.200l-2.600 3.200M647.79 571.900l2.600 3.200m0 -3.200l-2.600 3.200" fill="none" stroke="#00ffff" stroke-width="0.950"/><path d="M690.10 571.900l2.600 3.200m0 -3.200l-2.600 3.200M693.12 571.900l2.600 3.200m0 -3.200l-2.600 3.200" fill="none" stroke="#ffd700" stroke-width="0.950"/><path d="M701.70 571.900l2.600 3.200m0 -3.200l-2.600 3.200M704.72 571.900l2.600 3.200m0 -3.200l-2.600 3.200" fill="none" stroke="#00ffff" stroke-width="0.950"/><path d="M714.20 571.900l2.600 3.200m0 -3.200l-2.600 3.200" fill="none" stroke="#00ffff" stroke-width="0.950"/><path d="M723.20 571.900l2.600 3.200m0 -3.200l-2.600 3.200M726.22 571.900l2.600 3.200m0 -3.200l-2.600 3.200" fill="none" stroke="#00ffff" stroke-width="0.950"/><path d="M738.20 571.900l2.600 3.200m0 -3.200l-2.600 3.200M741.22 571.900l2.600 3.200m0 -3.200l-2.600 3.200M744.23 571.900l2.600 3.200m0 -3.200l-2.600 3.200M747.25 571.900l2.600 3.200m0 -3.200l-2.600 3.200M750.26 571.900l2.600 3.200m0 -3.200l-2.600 3.200M753.28 571.900l2.600 3.200m0 -3.200l-2.600 3.200M756.29 571.900l2.600 3.200m0 -3.200l-2.600 3.200M759.31 571.900l2.600 3.200m0 -3.200l-2.600 3.200" fill="none" stroke="#00ffff" stroke-width="0.950"/><path d="M774.40 571.900l2.600 3.200m0 -3.200l-2.600 3.200M777.42 571.900l2.600 3.200m0 -3.200l-2.600 3.200M780.43 571.900l2.600 3.200m0 -3.200l-2.600 3.200M783.45 571.900l2.600 3.200m0 -3.200l-2.600 3.200M786.46 571.900l2.600 3.200m0 -3.200l-2.600 3.200" fill="none" stroke="#ffd700" stroke-width="0.950"/><path d="M795.50 571.900l2.600 3.200m0 -3.200l-2.600 3.200M798.52 571.900l2.600 3.200m0 -3.200l-2.600 3.200M801.53 571.900l2.600 3.200m0 -3.200l-2.600 3.200" fill="none" stroke="#00ffff" stroke-width="0.950"/><path d="M810.40 571.900l2.600 3.200m0 -3.200l-2.600 3.200M813.42 571.900l2.600 3.200m0 -3.200l-2.600 3.200M816.43 571.900l2.600 3.200m0 -3.200l-2.600 3.200M819.45 571.900l2.600 3.200m0 -3.200l-2.600 3.200M822.46 571.900l2.600 3.200m0 -3.200l-2.600 3.200" fill="none" stroke="#ffd700" stroke-width="0.950"/><path d="M837.60 571.900l2.600 3.200m0 -3.200l-2.600 3.200M840.62 571.900l2.600 3.200m0 -3.200l-2.600 3.200M843.63 571.900l2.600 3.200m0 -3.200l-2.600 3.200M846.65 571.900l2.600 3.200m0 -3.200l-2.600 3.200M849.66 571.900l2.600 3.200m0 -3.200l-2.600 3.200M852.68 571.900l2.600 3.200m0 -3.200l-2.600 3.200M855.69 571.900l2.600 3.200m0 -3.200l-2.600 3.200M858.71 571.900l2.600 3.200m0 -3.200l-2.600 3.200M861.72 571.900l2.600 3.200m0 -3.200l-2.600 3.200M864.74 571.900l2.600 3.200m0 -3.200l-2.600 3.200M867.76 571.900l2.600 3.200m0 -3.200l-2.600 3.200M870.77 571.900l2.600 3.200m0 -3.200l-2.600 3.200M873.79 571.900l2.600 3.200m0 -3.200l-2.600 3.200M876.80 571.900l2.600 3.200m0 -3.200l-2.600 3.200M879.82 571.900l2.600 3.200m0 -3.200l-2.600 3.200" fill="none" stroke="#00ffff" stroke-width="0.950"/><path d="M124.8 537.500l4 4.200h-1.900v4.900h-4.200v-4.900h-1.900z" fill="none" stroke="#00b0d8" stroke-width="0.950" stroke-linejoin="round"/><path d="M224.4 537.500l4 4.200h-1.900v4.900h-4.200v-4.900h-1.900z" fill="none" stroke="#00b0d8" stroke-width="0.950" stroke-linejoin="round"/><path d="M302.8 537.500l4 4.200h-1.900v4.900h-4.200v-4.900h-1.900z" fill="none" stroke="#00b0d8" stroke-width="0.950" stroke-linejoin="round"/><path d="M345.3 537.500l4 4.200h-1.900v4.900h-4.200v-4.900h-1.900z" fill="none" stroke="#00b0d8" stroke-width="0.950" stroke-linejoin="round"/><path d="M471.9 537.500l4 4.200h-1.900v4.900h-4.200v-4.900h-1.900z" fill="none" stroke="#00b0d8" stroke-width="0.950" stroke-linejoin="round"/><path d="M511.1 537.500l4 4.200h-1.900v4.900h-4.200v-4.900h-1.900z" fill="none" stroke="#00b0d8" stroke-width="0.950" stroke-linejoin="round"/><path d="M848.6 537.500l4 4.200h-1.900v4.900h-4.200v-4.900h-1.900z" fill="none" stroke="#00b0d8" stroke-width="0.950" stroke-linejoin="round"/><path d="M142.3 546.400l4-4.200h-1.900v-4.900h-4.200v4.900h-1.900z" fill="none" stroke="#d4a800" stroke-width="0.950" stroke-linejoin="round"/><path d="M250.8 546.400l4-4.200h-1.900v-4.900h-4.200v4.900h-1.900z" fill="none" stroke="#d4a800" stroke-width="0.950" stroke-linejoin="round"/><path d="M331.9 546.400l4-4.200h-1.900v-4.900h-4.200v4.900h-1.900z" fill="none" stroke="#d4a800" stroke-width="0.950" stroke-linejoin="round"/><path d="M455.7 546.400l4-4.200h-1.900v-4.900h-4.200v4.900h-1.900z" fill="none" stroke="#d4a800" stroke-width="0.950" stroke-linejoin="round"/><path d="M488.9 546.400l4-4.200h-1.900v-4.900h-4.200v4.900h-1.900z" fill="none" stroke="#d4a800" stroke-width="0.950" stroke-linejoin="round"/><path d="M778.2 546.400l4-4.200h-1.900v-4.900h-4.200v4.900h-1.900z" fill="none" stroke="#d4a800" stroke-width="0.950" stroke-linejoin="round"/></svg>
<svg class="abs" style="left:7px;top:87px" width="6" height="4"><path d="M0 0h5.500l-2.750 3.500z" fill="#fff"/></svg>
<div class="t cl" id="ctitle" style="left:15.6px;transform:scaleX(0.9969);transform-origin:0 50%;top:84.500px">USDJPY,Daily</div>
<div class="t cl" id="macdl" style="left:7.3px;transform:scaleX(0.9687);transform-origin:0 50%;top:398.800px">Signal MACD(12,26,9) 0.0000 0.9713 0.0000 0.6656</div>
<div class="t cl" id="sql" style="left:7.5px;transform:scaleX(0.9575);transform-origin:0 50%;top:525px">Signal Square 0.0500 0.4700 0.2200</div>
<div class="t ax" id="ax0" style="left:992.0px;transform:scaleX(0.8685);transform-origin:0 50%;top:89.0px">160.020</div>
<div class="t ax" id="ax1" style="left:992.0px;transform:scaleX(0.8685);transform-origin:0 50%;top:114.0px">158.320</div>
<div class="t ax" id="ax2" style="left:992.0px;transform:scaleX(0.8685);transform-origin:0 50%;top:139.0px">156.620</div>
<div class="t ax" id="ax3" style="left:992.0px;transform:scaleX(0.8685);transform-origin:0 50%;top:164.0px">154.870</div>
<div class="t ax" id="ax4" style="left:992.0px;transform:scaleX(0.8685);transform-origin:0 50%;top:189.0px">153.170</div>
<div class="t ax" id="ax5" style="left:992.0px;transform:scaleX(0.8685);transform-origin:0 50%;top:213.0px">151.470</div>
<div class="t ax" id="ax6" style="left:992.0px;transform:scaleX(0.8685);transform-origin:0 50%;top:238.0px">149.770</div>
<div class="t ax" id="ax7" style="left:992.0px;transform:scaleX(0.8685);transform-origin:0 50%;top:263.0px">148.070</div>
<div class="t ax" id="ax8" style="left:992.0px;transform:scaleX(0.8685);transform-origin:0 50%;top:288.0px">146.320</div>
<div class="t ax" id="ax9" style="left:992.0px;transform:scaleX(0.8685);transform-origin:0 50%;top:313.0px">144.620</div>
<div class="t ax" id="ax10" style="left:992.0px;transform:scaleX(0.8685);transform-origin:0 50%;top:338.0px">142.920</div>
<div class="t ax" id="ax11" style="left:992.0px;transform:scaleX(0.8685);transform-origin:0 50%;top:363.0px">141.220</div>
<div class="t ax" id="ax12" style="left:992.0px;transform:scaleX(0.8685);transform-origin:0 50%;top:388.0px">139.520</div>
<div class="abs" style="left:989px;top:94px;width:31px;height:9px;background:#fff"></div>
<div class="t ax" id="axp" style="left:992.0px;transform:scaleX(0.8685);transform-origin:0 50%;top:94.500px;color:#000">159.644</div>
<div class="t ax" id="bx0" style="left:991.0px;transform:scaleX(0.8577);transform-origin:0 50%;top:396.5px">1.5346</div>
<div class="t ax" id="bx1" style="left:991.0px;transform:scaleX(0.8643);transform-origin:0 50%;top:442.0px">0.00</div>
<div class="t ax" id="bx2" style="left:990.0px;transform:scaleX(0.9452);transform-origin:0 50%;top:511.5px">-2.2985</div>
<div class="t ax" id="bx3" style="left:991px;top:523.5px">1</div>
<div class="t ax" id="bx4" style="left:991px;top:610.5px">0</div>
<div class="t dt" id="dt0" style="left:3.7px;transform:scaleX(0.9126);transform-origin:0 50%;">4 Feb 2025</div>
<div class="t dt" id="dt1" style="left:52.0px;transform:scaleX(0.9126);transform-origin:0 50%;">26 Feb 2025</div>
<div class="t dt" id="dt2" style="left:100.2px;transform:scaleX(0.9126);transform-origin:0 50%;">18 Mar 2025</div>
<div class="t dt" id="dt3" style="left:148.4px;transform:scaleX(0.9126);transform-origin:0 50%;">8 Apr 2025</div>
<div class="t dt" id="dt4" style="left:196.7px;transform:scaleX(0.9126);transform-origin:0 50%;">30 Apr 2025</div>
<div class="t dt" id="dt5" style="left:244.9px;transform:scaleX(0.9126);transform-origin:0 50%;">22 May 2025</div>
<div class="t dt" id="dt6" style="left:293.2px;transform:scaleX(0.9126);transform-origin:0 50%;">13 Jun 2025</div>
<div class="t dt" id="dt7" style="left:341.4px;transform:scaleX(0.9126);transform-origin:0 50%;">7 Jul 2025</div>
<div class="t dt" id="dt8" style="left:389.7px;transform:scaleX(0.9126);transform-origin:0 50%;">29 Jul 2025</div>
<div class="t dt" id="dt9" style="left:437.9px;transform:scaleX(0.9126);transform-origin:0 50%;">20 Aug 2025</div>
<div class="t dt" id="dt10" style="left:486.2px;transform:scaleX(0.9126);transform-origin:0 50%;">11 Sep 2025</div>
<div class="t dt" id="dt11" style="left:534.5px;transform:scaleX(0.9126);transform-origin:0 50%;">3 Oct 2025</div>
<div class="t dt" id="dt12" style="left:582.7px;transform:scaleX(0.9126);transform-origin:0 50%;">26 Oct 2025</div>
<div class="t dt" id="dt13" style="left:631.0px;transform:scaleX(0.9126);transform-origin:0 50%;">17 Nov 2025</div>
<div class="t dt" id="dt14" style="left:679.2px;transform:scaleX(0.9126);transform-origin:0 50%;">9 Dec 2025</div>
<div class="t dt" id="dt15" style="left:727.5px;transform:scaleX(0.9126);transform-origin:0 50%;">2 Jan 2026</div>
<div class="t dt" id="dt16" style="left:775.7px;transform:scaleX(0.9126);transform-origin:0 50%;">26 Jan 2026</div>
<div class="t dt" id="dt17" style="left:824.0px;transform:scaleX(0.9126);transform-origin:0 50%;">17 Feb 2026</div>
<div class="t dt" id="dt18" style="left:872.2px;transform:scaleX(0.9126);transform-origin:0 50%;">10 Mar 2026</div>
<div class="abs" style="left:12px;top:98px;width:109.500px;height:196px;background:#ff4500"></div>
<div class="abs" style="left:16px;top:102px;width:102px;height:188px;background:#808080"></div>
<div class="t" id="ptitle" style="left:24.0px;transform:scaleX(1.0400);transform-origin:0 50%;top:107.200px;font-size:11.500px;color:#fff;letter-spacing:0px">通貨別強弱</div>
<div class="t" id="ptime" style="left:24.0px;transform:scaleX(1.0618);transform-origin:0 50%;top:123px;font-size:11.500px;color:#fff;letter-spacing:0px">時間:15　足:3</div>
<div class="row" id="row0" style="left:24.0px;transform:scaleX(0.9722);transform-origin:0 50%;top:137.7px;color:#008000">1.JPY &nbsp;6.6</div>
<svg class="abs" style="left:95px;top:138.7px" width="13" height="11"><path d="M1 9.500L6.200 0.500L11.500 9.500z" fill="#00ff00"/></svg>
<div class="row" id="row1" style="left:24.0px;transform:scaleX(0.9759);transform-origin:0 50%;top:157.4px;color:#008000">2.CAD 6.4</div>
<svg class="abs" style="left:95px;top:158.4px" width="13" height="11"><path d="M1 9.500L6.200 0.500L11.500 9.500z" fill="#00ff00"/></svg>
<div class="row" id="row2" style="left:24.0px;transform:scaleX(0.9273);transform-origin:0 50%;top:177.0px;color:#f4a460">3.CHF &nbsp;5.7</div>
<svg class="abs" style="left:95px;top:178.5px" width="13" height="11"><path d="M1 0.500L6.200 9.500L11.500 0.500z" fill="#ff0000"/></svg>
<div class="row" id="row3" style="left:24.0px;transform:scaleX(0.9759);transform-origin:0 50%;top:196.7px;color:#ffff00">4.USD 5.0</div>
<svg class="abs" style="left:95px;top:197.7px" width="13" height="11"><path d="M1 9.500L6.200 0.500L11.500 9.500z" fill="#00ff00"/></svg>
<div class="row" id="row4" style="left:24.0px;transform:scaleX(0.9759);transform-origin:0 50%;top:216.4px;color:#ffff00">5.EUR 4.4</div>
<svg class="abs" style="left:95px;top:217.9px" width="13" height="11"><path d="M1 0.500L6.200 9.500L11.500 0.500z" fill="#ff0000"/></svg>
<div class="row" id="row5" style="left:24.0px;transform:scaleX(0.9759);transform-origin:0 50%;top:236.1px;color:#ffff00">6.AUD 3.7</div>
<svg class="abs" style="left:95px;top:237.1px" width="13" height="11"><path d="M1 9.500L6.200 0.500L11.500 9.500z" fill="#00ff00"/></svg>
<div class="row" id="row6" style="left:24.0px;transform:scaleX(0.9793);transform-origin:0 50%;top:255.7px;color:#ff4500">7.GBP 2.1</div>
<svg class="abs" style="left:95px;top:257.2px" width="13" height="11"><path d="M1 0.500L6.200 9.500L11.500 0.500z" fill="#ff0000"/></svg>
<div class="row" id="row7" style="left:24.0px;transform:scaleX(0.9273);transform-origin:0 50%;top:275.4px;color:#ff4500">8.NZD &nbsp;2.0</div>
<svg class="abs" style="left:95px;top:276.9px" width="13" height="11"><path d="M1 0.500L6.200 9.500L11.500 0.500z" fill="#ff0000"/></svg>
<div class="abs" style="left:0;top:636px;width:1024px;height:17px;background:#f0f0f0"></div>
<div class="abs" style="left:0;top:653px;width:1024px;height:17px;background:#f0f0f0"></div>
<div class="abs" style="left:0;top:635px;width:1024px;height:1px;background:#8c8c8c"></div>
<div class="abs" style="left:5px;top:636px;width:70px;height:15px;background:#fff;border:1px solid #444;border-top:none;box-sizing:border-box"></div>
<div class="t tab" id="tab0" style="left:14.0px;transform:scaleX(0.9685);transform-origin:0 50%;color:#333">USDJPY,Daily</div>
<div class="t tab" id="tab1" style="left:84.0px;transform:scaleX(0.9589);transform-origin:0 50%;">EURUSD,Daily</div>
<div class="t tab" id="tab2" style="left:154.5px;transform:scaleX(0.9891);transform-origin:0 50%;">JP225Cash,Daily</div>
<div class="t tab" id="tab3" style="left:235.0px;transform:scaleX(0.9764);transform-origin:0 50%;">US30Cash,Daily</div>
<div class="t tab" id="tab4" style="left:312.0px;transform:scaleX(0.9803);transform-origin:0 50%;">US100Cash,Daily</div>
<div class="t tab" id="tab5" style="left:394.0px;transform:scaleX(1.0109);transform-origin:0 50%;">GOLD,Daily</div>
<div class="t tab" id="tab6" style="left:457.0px;transform:scaleX(1.0114);transform-origin:0 50%;">OIL-APR26,Daily</div>
<div class="t tab" id="tab7" style="left:538.0px;transform:scaleX(0.9514);transform-origin:0 50%;">GBPUSD,H1</div>
<div class="t tab" id="tab8" style="left:602.5px;transform:scaleX(0.9845);transform-origin:0 50%;">AUDUSD,H1</div>
<div class="t tab" id="tab9" style="left:669.0px;transform:scaleX(0.9493);transform-origin:0 50%;">GBPJPY,Daily</div>
<div class="t tab" id="tab10" style="left:737.8px;transform:scaleX(0.9734);transform-origin:0 50%;">AUDJPY,H1</div>
<div class="t tab" id="tab11" style="left:801.0px;transform:scaleX(0.9424);transform-origin:0 50%;">USDJPY,H1</div>
<div class="t tab" id="tab12" style="left:861.0px;transform:scaleX(0.9647);transform-origin:0 50%;">EURJPY,Daily</div>
<div class="t tab" id="tab13" style="left:931.0px;transform:scaleX(0.9708);transform-origin:0 50%;">ETHUSD,Daily</div>
<div class="abs" style="left:147.0px;top:639px;width:1px;height:11px;background:#777"></div>
<div class="abs" style="left:226.0px;top:639px;width:1px;height:11px;background:#777"></div>
<div class="abs" style="left:304.0px;top:639px;width:1px;height:11px;background:#777"></div>
<div class="abs" style="left:385.5px;top:639px;width:1px;height:11px;background:#777"></div>
<div class="abs" style="left:448.5px;top:639px;width:1px;height:11px;background:#777"></div>
<div class="abs" style="left:531.0px;top:639px;width:1px;height:11px;background:#777"></div>
<div class="abs" style="left:593.5px;top:639px;width:1px;height:11px;background:#777"></div>
<div class="abs" style="left:659.5px;top:639px;width:1px;height:11px;background:#777"></div>
<div class="abs" style="left:729.0px;top:639px;width:1px;height:11px;background:#777"></div>
<div class="abs" style="left:792.0px;top:639px;width:1px;height:11px;background:#777"></div>
<div class="abs" style="left:852.0px;top:639px;width:1px;height:11px;background:#777"></div>
<div class="abs" style="left:921.0px;top:639px;width:1px;height:11px;background:#777"></div>
<div class="abs" style="left:994.0px;top:639px;width:1px;height:11px;background:#777"></div>
<svg class="abs" style="left:996px;top:640px" width="24" height="8"><path d="M6.500 0.500v6l-3.500-3zM16.500 0.500v6l3.500-3z" fill="#777"/></svg>
<div class="t st" id="st0" style="left:3.0px;transform:scaleX(0.8574);transform-origin:0 50%;">F1キーでヘルプが表示されます</div>
<div class="t st" id="st1" style="left:493.0px;transform:scaleX(1.0597);transform-origin:0 50%;">Default</div>
<div class="t st" id="st2" style="left:580.0px;transform:scaleX(0.9751);transform-origin:0 50%;">2025.06.11 00:00</div>
<div class="t st" id="st3" style="left:657.0px;transform:scaleX(1.0109);transform-origin:0 50%;">O: 144.801</div>
<div class="t st" id="st4" style="left:710.0px;transform:scaleX(0.9867);transform-origin:0 50%;">H: 145.456</div>
<div class="t st" id="st5" style="left:763.0px;transform:scaleX(0.9862);transform-origin:0 50%;">L: 144.312</div>
<div class="t st" id="st6" style="left:814.0px;transform:scaleX(0.9672);transform-origin:0 50%;">C: 144.521</div>
<div class="t st" id="st7" style="left:865.8px;transform:scaleX(0.9785);transform-origin:0 50%;">V: 222216</div>
<div class="t st" id="st8" style="left:937.0px;transform:scaleX(1.0162);transform-origin:0 50%;">59558/10 kb</div>
<div class="abs" style="left:488.5px;top:654px;width:1px;height:14px;background:#b4b4b4"></div>
<div class="abs" style="left:575.0px;top:654px;width:1px;height:14px;background:#b4b4b4"></div>
<div class="abs" style="left:651.5px;top:654px;width:1px;height:14px;background:#b4b4b4"></div>
<div class="abs" style="left:705.0px;top:654px;width:1px;height:14px;background:#b4b4b4"></div>
<div class="abs" style="left:758.0px;top:654px;width:1px;height:14px;background:#b4b4b4"></div>
<div class="abs" style="left:809.0px;top:654px;width:1px;height:14px;background:#b4b4b4"></div>
<div class="abs" style="left:861.0px;top:654px;width:1px;height:14px;background:#b4b4b4"></div>
<div class="abs" style="left:911.0px;top:654px;width:1px;height:14px;background:#b4b4b4"></div>
<svg class="abs" style="left:916px;top:657px" width="18" height="9"><rect x="0.0" y="5.0" width="1.200" height="3.0" fill="#2a6fb0"/><rect x="1.9" y="4.4" width="1.200" height="3.6" fill="#2a6fb0"/><rect x="3.8" y="3.8" width="1.200" height="4.2" fill="#2a6fb0"/><rect x="5.7" y="3.2" width="1.200" height="4.8" fill="#2a6fb0"/><rect x="7.6" y="2.6" width="1.200" height="5.4" fill="#2a6fb0"/><rect x="9.5" y="2.0" width="1.200" height="6.0" fill="#2a6fb0"/><rect x="11.4" y="1.4" width="1.200" height="6.6" fill="#2a6fb0"/><rect x="13.3" y="0.8" width="1.200" height="7.2" fill="#2a6fb0"/><rect x="15.2" y="0.2" width="1.200" height="7.8" fill="#2a6fb0"/><rect x="0.0" y="0" width="1.200" height="4.5" fill="#7a9a3a"/><rect x="1.9" y="0" width="1.200" height="3.9" fill="#7a9a3a"/><rect x="3.8" y="0" width="1.200" height="3.3" fill="#7a9a3a"/><rect x="5.7" y="0" width="1.200" height="2.7" fill="#7a9a3a"/><rect x="7.6" y="0" width="1.200" height="2.1" fill="#7a9a3a"/><rect x="9.5" y="0" width="1.200" height="1.5" fill="#7a9a3a"/><rect x="11.4" y="0" width="1.200" height="0.9" fill="#7a9a3a"/><rect x="13.3" y="0" width="1.200" height="0.3" fill="#7a9a3a"/><rect x="15.2" y="0" width="1.200" height="-0.3" fill="#7a9a3a"/></svg>
<div class="abs" style="left:0;top:668.500px;width:1024px;height:1.500px;background:#b4b4b4"></div>
<svg class="abs" style="left:1012px;top:657px" width="12" height="12"><path d="M11 2L2 11M11 5.500L5.500 11M11 9L9 11" stroke="#bdbdbd" stroke-width="1"/></svg>
</body></html>
